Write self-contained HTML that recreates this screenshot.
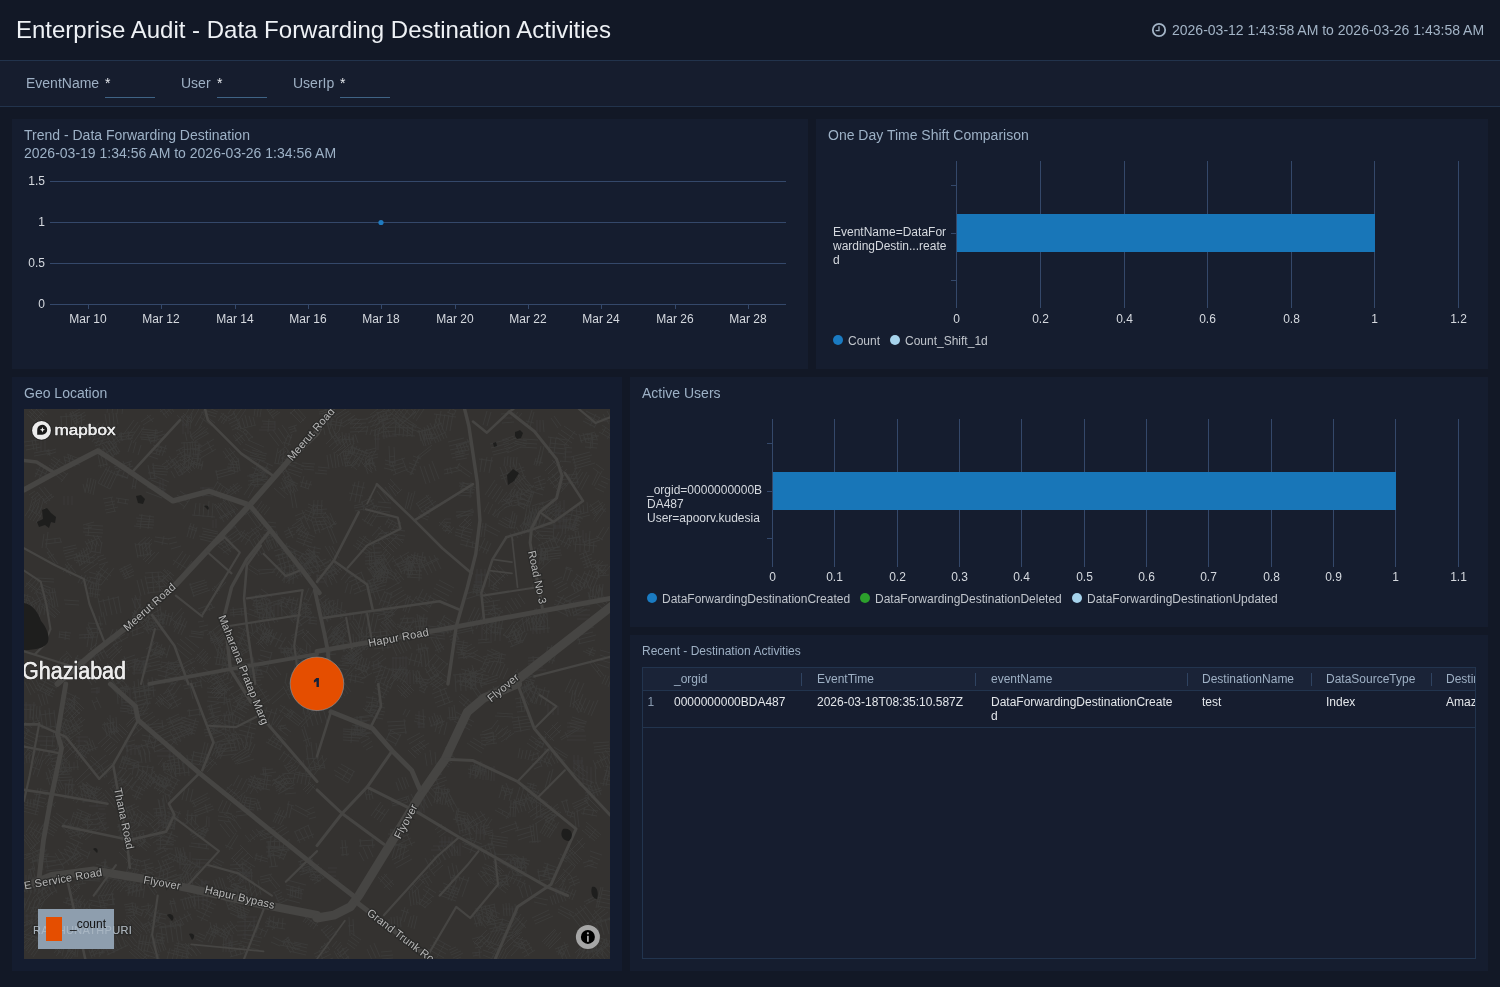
<!DOCTYPE html>
<html><head><meta charset="utf-8">
<style>
*{box-sizing:border-box;margin:0;padding:0}
html,body{width:1500px;height:987px;overflow:hidden;background:#121826;font-family:"Liberation Sans",sans-serif}
.abs{position:absolute}
.t{position:absolute;white-space:pre;line-height:1}
#hdr{position:absolute;left:0;top:0;width:1500px;height:60px;background:#121826}
#bar{position:absolute;left:0;top:60px;width:1500px;height:47px;background:#161d2e;border-top:1px solid #22334c;border-bottom:1px solid #22334c}
.panel{position:absolute;background:#151d2f}
.ptitle{color:#9db1c6;font-size:14px}
.lbl{color:#d5d9df;font-size:12px}
</style></head><body>
<div id="root" style="position:absolute;left:0;top:0;width:1500px;height:987px;will-change:transform;background:#121826">
<div id="hdr">
  <div class="t" style="left:16px;top:18px;font-size:24px;color:#eef1f5">Enterprise Audit - Data Forwarding Destination Activities</div>
  <svg class="abs" style="left:1151px;top:22px" width="16" height="16" viewBox="0 0 16 16"><circle cx="8" cy="8" r="6.2" fill="none" stroke="#a3b4c6" stroke-width="1.8"/><path d="M8 4.2V8.6H4.6" fill="none" stroke="#a3b4c6" stroke-width="1.3"/></svg>
  <div class="t" style="left:1172px;top:23px;font-size:14px;color:#a3b4c6">2026-03-12 1:43:58 AM to 2026-03-26 1:43:58 AM</div>
</div>
<div id="bar">
  <div class="t" style="left:26px;top:15px;font-size:14px;color:#9eb0c4">EventName</div>
  <div class="t" style="left:105px;top:15px;font-size:14px;color:#e6e9ee">*</div>
  <div class="abs" style="left:105px;top:36px;width:50px;height:1px;background:#3f6385"></div>
  <div class="t" style="left:181px;top:15px;font-size:14px;color:#9eb0c4">User</div>
  <div class="t" style="left:217px;top:15px;font-size:14px;color:#e6e9ee">*</div>
  <div class="abs" style="left:217px;top:36px;width:50px;height:1px;background:#3f6385"></div>
  <div class="t" style="left:293px;top:15px;font-size:14px;color:#9eb0c4">UserIp</div>
  <div class="t" style="left:340px;top:15px;font-size:14px;color:#e6e9ee">*</div>
  <div class="abs" style="left:340px;top:36px;width:50px;height:1px;background:#3f6385"></div>
</div>

<!-- Panel 1: Trend -->
<div class="panel" style="left:12px;top:119px;width:796px;height:250px">
  <div class="t ptitle" style="left:12px;top:9px">Trend - Data Forwarding Destination</div>
  <div class="t ptitle" style="left:12px;top:27px">2026-03-19 1:34:56 AM to 2026-03-26 1:34:56 AM</div>
</div>

<!-- Panel 2: Time shift -->
<div class="panel" style="left:816px;top:119px;width:672px;height:250px">
  <div class="t ptitle" style="left:12px;top:9px">One Day Time Shift Comparison</div>
</div>
<!-- Panel 3: Geo -->
<div class="panel" id="geo" style="left:12px;top:377px;width:610px;height:594px;background:#141c2f">
  <div class="t ptitle" style="left:12px;top:9px">Geo Location</div>
</div>
<!-- MAP START -->
<div class="abs" style="left:24px;top:409px;width:586px;height:550px;overflow:hidden;background:#343230">
<svg width="586" height="550" viewBox="0 0 586 550" style="position:absolute;left:0;top:0">
<rect width="586" height="550" fill="#343230"/>
<path d="M269 274L280 281M268 276L279 283M264 277L277 285M277 276L271 284M274 276L270 282M497 38L483 44M495 35L482 41M493 32L480 38M492 29L479 34M490 27L478 31M178 119L194 123M179 122L194 125M178 125L193 128M175 127L193 131M176 130L192 134M270 533L284 536M270 536L283 539M268 539L283 543M265 542L282 546M150 56L142 61M149 52L140 59M145 51L138 56M148 59L142 51M152 58L145 47M591 12L577 12M592 9L577 10M449 178L458 179M448 180L457 182M449 183L457 184M454 177L453 185M451 175L449 185M514 326L522 329M514 329L521 332M511 332L520 335M511 335L519 338M522 327L518 339M578 62L570 77M574 63L568 76M37 223L47 224M35 225L46 227M35 228L46 230M42 222L41 231M36 222L35 229M16 502L7 503M14 498L6 499M537 403L522 414M535 402L521 412M535 398L519 410M534 395L517 408M217 311L233 316M217 316L232 320M215 321L231 325M214 325L230 329M227 312L223 329M300 280L308 282M298 283L307 286M304 278L302 287M93 338L85 346M91 335L82 343M88 333L80 341M86 329L77 338M84 326L74 335M518 202L524 212M517 207L521 214M514 209L518 215M509 208L516 217M507 210L513 219M270 141L274 157M266 141L270 158M262 143L266 159M258 146L262 160M254 145L258 161M273 142L252 147M420 315L414 319M419 311L412 316M416 309L410 314M462 532L476 537M462 537L475 541M459 541L473 546M459 546L471 551M437 285L451 297M435 287L449 300M435 292L447 302M445 290L439 297M450 295L445 302M10 293L9 311M6 295L6 311M2 293L2 311M-1 292L-2 311M12 296L-4 296M10 301L-2 300M12 271L17 281M7 270L14 282M5 274L11 284M1 273L7 286M454 241L440 249M451 238L438 245M448 235L436 242M443 250L436 239M364 163L362 174M361 162L359 173M358 161L356 173M355 163L353 173M352 159L350 172M366 169L348 167M367 164L349 162M240 125L248 140M236 126L245 142M233 129L241 144M229 130L238 146M225 130L235 147M20 78L29 89M15 78L26 92M13 83L23 95M28 85L19 92M30 87L20 94M20 341L15 356M16 341L11 355M13 339L7 354M530 338L544 347M528 340L543 349M529 345L541 352M79 38L83 57M75 38L80 58M73 41L77 59M84 55L74 57M82 40L70 42M401 98L408 100M400 100L407 103M397 102L406 105M395 105L405 108M394 107L404 111M48 48L51 58M44 46L47 59M40 47L43 60M245 198L232 201M248 194L231 198M234 204L232 195M239 203L237 193M118 319L109 327M116 315L106 324M115 322L112 318M313 199L322 204M311 201L320 206M312 204L319 209M322 201L316 210M291 109L296 124M288 112L292 125M296 120L290 122M383 -5L391 4M378 -3L387 7M375 1L384 11M371 4L380 14M369 9L376 17M392 2L374 18M392 3L375 17M293 146L301 158M290 149L297 160M285 150L294 162M283 153L290 165M280 157L287 167M402 19L407 35M400 22L405 36M397 22L402 37M394 21L400 37M144 385L147 393M141 385L143 394M398 245L394 258M393 245L390 257M388 244L385 256M398 254L384 250M449 106L432 107M450 102L432 103M361 51L371 54M361 55L370 57M360 59L369 61M210 277L194 284M209 272L192 280M205 269L190 275M204 264L188 271M202 261L187 267M198 306L186 309M197 302L185 305M197 298L184 301M195 294L183 298M190 309L187 295M189 309L185 296M410 146L417 160M405 147L412 162M401 149L408 164M396 150L404 166M415 150L397 159M414 149L397 157M529 127L534 139M525 128L530 141M522 131L527 142M518 133L523 144M515 135L520 145M531 129L514 137M536 137L517 145M168 4L166 20M164 6L162 19M168 13L162 12M168 9L162 8M69 172L65 180M67 169L62 178M64 168L60 177M62 166L57 175M58 166L54 174M70 175L55 167M55 337L40 352M52 334L37 349M49 330L34 345M46 327L30 342M49 343L40 333M53 340L43 330M536 497L550 504M534 500L548 507M534 503L546 510M271 396L286 404M267 399L284 408M507 268L492 270M506 264L492 266M472 207L471 217M468 208L467 217M474 211L465 211M255 425L236 431M251 422L235 427M251 418L234 423M340 100L331 102M341 97L330 99M338 95L330 97M340 102L338 92M21 99L12 114M18 98L9 112M15 97L6 111M14 93L4 109M10 93L1 107M17 108L5 100M581 357L591 360M580 361L590 364M581 366L589 368M579 370L588 372M576 374L587 376M584 356L579 377M586 357L582 377M125 328L131 343M121 331L126 345M117 335L122 346M112 336L117 348M129 333L111 340M192 450L200 454M189 452L198 457M189 455L197 459M265 422L248 433M263 418L246 429M260 416L244 426M256 431L249 420M430 336L423 342M429 333L421 339M428 338L426 335M534 297L534 306M529 296L529 306M524 295L524 306M342 17L334 24M338 15L331 21M337 10L329 18M333 9L326 15M331 6L324 12M268 396L265 409M265 392L262 408M270 397L263 395M103 297L114 299M103 301L114 302M104 304L113 305M112 296L111 307M108 298L107 305M21 283L24 295M18 285L21 296M14 285L18 297M428 428L428 438M425 428L425 438M421 427L421 438M418 428L418 438M431 433L415 433M183 279L204 281M183 283L203 285M184 288L203 289M183 292L203 294M201 278L200 296M156 468L137 476M153 465L136 472M152 461L134 468M150 457L132 464M148 453L131 460M212 289L227 297M213 294L225 301M208 296L223 304M209 301L221 308M205 303L219 311M216 292L209 305M186 181L169 187M184 179L168 184M183 176L167 181M183 173L166 179M181 171L165 176M170 188L166 174M567 250L580 267M566 254L577 268M575 261L573 263M570 155L560 159M572 151L559 156M568 149L558 153M568 145L556 150M565 142L555 146M564 159L559 144M568 159L561 141M55 533L53 548M52 533L51 548M57 535L50 534M167 408L175 418M161 409L172 421M159 413L168 424M175 417L167 424M169 408L160 416M313 525L305 531M312 522L303 529M310 519L301 527M308 517L299 524M304 516L297 522M307 532L297 520M357 153L350 153M357 148L350 149M356 144L349 144M357 139L349 139M357 134L348 135M352 156L349 133M24 59L19 71M21 56L15 70M18 54L11 68M22 69L11 64M24 66L12 60M380 272L390 282M378 274L388 284M377 277L386 286M373 276L384 288M374 281L382 289M387 276L377 287M82 419L75 419M83 414L75 414M82 409L75 410M82 405L75 405M81 400L74 400M365 162L354 168M363 158L352 163M364 163L362 158M355 169L351 162M529 507L511 515M526 505L510 512M525 501L508 509M468 433L472 448M464 434L469 449M461 437L465 450M457 437L462 451M469 434L457 438M471 438L457 443M159 4L168 13M157 7L165 15M153 6L163 17M161 5L156 10M284 95L294 99M284 98L292 102M281 101L291 105M281 105L290 109M278 107L288 112M293 97L287 112M290 95L283 112M266 70L270 77M264 72L267 79M261 73L264 80M257 73L261 82M269 75L260 80M271 73L257 80M41 462L45 471M39 466L43 473M36 466L40 474M33 467L37 475M296 510L289 520M292 510L286 518M291 507L284 516M288 506L281 514M286 503L279 513M294 517L280 507M158 469L142 473M159 465L141 470M228 460L216 474M227 457L214 472M219 472L216 469M222 470L216 465M18 381L24 382M17 384L23 386M14 388L22 390M13 392L21 394M10 395L20 398M17 380L13 396M301 173L292 173M301 169L292 170M302 166L292 167M302 175L302 163M294 175L293 165M165 60L155 67M163 57L153 64M158 55L150 60M157 50L148 57M154 47L146 53M161 64L150 49M159 66L148 50M303 349L290 366M299 347L286 363M295 344L283 360M297 358L289 352M461 262L445 270M461 259L443 267M450 269L448 263M450 268L448 264M499 447L502 462M494 448L498 463M489 448L494 464M486 450L489 465M464 501L472 510M463 505L470 512M461 507L467 514M456 507L464 517M454 509L462 519M75 175L73 189M73 173L71 189M70 174L68 188M67 175L66 188M76 186L64 184M77 181L64 179M92 102L82 104M94 98L81 101M91 95L81 97M91 92L80 94M89 88L79 90M91 103L87 88M281 195L288 196M279 199L287 200M279 203L287 204M276 207L286 208M283 193L281 209M479 209L476 226M476 209L473 226M473 208L470 225M469 209L467 225M477 224L467 223M480 220L465 217M401 147L400 154M399 143L397 154M396 147L395 153M394 144L392 153M391 143L390 152M402 149L389 146M402 152L389 149M289 462L276 466M289 458L275 463M287 464L285 458M585 339L589 345M581 341L586 347M578 343L582 350M575 346L579 352M63 75L65 82M59 75L61 83M20 89L15 105M16 90L12 104M12 89L8 103M9 87L5 102M485 42L469 46M487 38L468 43M485 34L467 39M485 30L466 35M510 343L508 352M507 341L504 351M503 341L501 350M499 341L497 350M496 339L494 349M303 11L306 25M298 11L301 26M306 14L297 16M437 548L430 551M439 544L429 549M437 542L427 546M434 540L426 544M432 538L425 541M309 549L294 555M307 545L293 552M305 542L291 548M305 538L290 545M300 553L295 541M510 426L494 431M509 422L493 427M510 417L491 422M495 54L501 70M489 53L496 71M486 57L492 73M481 57L487 75M476 58L483 76M501 61L477 70M500 58L476 67M550 354L564 364M549 358L561 367M546 361L559 371M556 356L549 365M249 443L252 458M246 445L248 458M250 446L246 446M254 457L245 458M53 351L54 361M50 353L50 361M45 352L46 362M42 353L42 362M37 352L38 362M55 358L37 359M78 488L81 498M74 486L77 499M467 3L463 17M463 2L459 16M45 250L40 261M42 249L36 259M37 249L33 257M14 529L0 540M12 525L-3 536M8 522L-5 533M8 517L-8 529M5 513L-11 526M73 228L55 229M71 225L55 226M61 230L61 225M67 230L67 224M109 57L92 63M107 55L91 60M108 52L90 58M103 62L99 52M106 58L105 53M474 399L487 406M471 401L485 409M486 403L482 410M479 402L478 405M55 147L42 151M53 145L41 148M50 142L40 145M53 139L39 142M52 136L39 139M280 193L282 201M277 194L279 202M399 380L408 397M395 381L404 399M392 385L400 401M387 385L396 403M384 388L392 405M211 322L220 334M208 324L217 336M212 323L209 325M246 466L256 478M244 469L253 480M37 344L21 347M34 340L20 343M25 346L24 342M26 347L25 341M584 503L573 511M581 500L571 508M578 498L569 506M578 511L570 501M498 523L483 532M496 520L482 529M543 108L541 125M540 107L538 125M545 111L537 110M422 272L409 281M418 271L408 278M418 268L406 276M415 266L405 274M414 264L403 272M403 238L405 257M400 241L402 258M396 240L398 258M157 137L147 140M153 133L145 135M152 128L144 130M115 336L115 346M111 337L111 346M107 337L107 346M103 334L103 346M117 337L101 337M462 114L460 128M459 114L457 128M463 118L456 118M566 396L552 403M564 393L550 400M566 390L549 398M564 388L548 395M565 397L561 388M283 140L293 152M281 142L291 153M279 144L289 155M277 146L286 157M275 148L284 159M292 147L280 157M291 147L280 156M410 190L406 198M407 186L402 196M403 184L398 194M399 180L393 192M407 197L394 191M408 194L395 188M74 544L67 547M72 541L66 544M68 549L65 541M71 548L68 540M263 371L255 383M260 369L252 380M256 366L248 377M260 378L250 371M262 379L249 370M90 159L77 176M84 159L73 173M81 155L70 170M84 171L72 162M87 167L75 158M107 428L97 431M103 425L95 427M101 420L94 422M103 415L93 418M99 432L94 415M100 432L95 415M128 209L134 220M127 212L131 221M124 212L129 222M122 214L127 223M120 216L125 225M133 216L122 222M133 213L119 220M138 504L130 515M135 501L127 513M131 499L124 511M129 496L120 509M135 512L121 503M136 510L122 501M44 414L53 421M40 415L51 424M37 417L49 427M49 414L41 424M124 500L117 501M127 496L117 498M125 502L124 494M261 195L274 210M257 199L270 214M189 94L188 109M185 92L184 108M180 95L179 108M176 94L175 107M172 94L170 107M191 108L168 106M384 60L369 66M382 57L367 62M379 54L366 58M381 49L365 54M372 65L368 53M383 62L378 49M130 9L119 16M127 6L117 13M129 13L123 6M143 399L157 405M143 403L155 409M139 405L154 412M139 409L152 415M136 411L151 418M156 402L148 420M150 402L144 416M586 157L578 167M582 157L576 165M579 156L573 163M579 152L571 161M576 151L569 159M580 165L571 157M582 165L570 155M288 460L298 462M288 462L298 464M286 465L297 467M287 468L297 469M286 470L297 472M149 489L153 503M146 491L149 504M152 494L145 495M151 492L146 493M98 439L112 453M95 443L108 456M112 450L106 457M109 446L102 454M48 371L29 372M48 368L29 369M46 365L28 366M48 362L28 363M34 372L33 362M31 372L31 362M283 208L293 209M285 211L293 212M284 214L293 215M286 207L286 215M115 358L104 360M117 353L103 355M111 359L110 353M115 358L114 353M119 541L136 546M120 545L135 550M549 192L553 205M546 193L550 206M543 195L547 207M540 197L544 208M470 495L473 509M465 496L469 510M461 496L464 511M457 497L460 512M453 500L456 513M471 495L451 500M471 498L453 502M589 342L570 344M585 339L570 341M585 336L570 338M585 333L569 334M566 106L551 110M564 103L550 107M149 448L138 453M147 444L137 449M146 451L143 445M387 187L371 196M382 185L369 193M380 181L367 189M378 178L365 185M376 173L362 181M218 228L226 242M215 233L223 244M210 233L219 247M206 236L215 249M202 239L211 252M227 240L209 251M227 237L206 251M324 540L319 546M320 539L316 544M318 536L313 542M317 533L311 540M313 532L308 538M432 232L444 234M432 235L444 237M433 238L443 239M433 240L443 242M432 243L442 245M440 231L437 246M325 540L315 548M323 538L313 545M317 548L313 544M473 272L456 277M474 269L456 275M474 266L455 272M458 279L455 270M208 407L217 420M204 410L213 423M200 413L210 425M196 415L206 428M323 218L312 226M324 213L310 224M321 211L308 221M511 113L504 124M506 113L500 121M504 107L496 118M508 119L499 113M508 120L499 113M361 180L346 184M362 176L345 181M362 173L344 178M360 171L344 175M360 168L343 172M348 184L345 171M506 117L519 128M503 120L516 132M515 123L510 128M507 118L504 122M499 30L514 31M499 34L513 35M496 38L513 39M276 152L281 162M272 155L277 165M267 156L272 167M279 154L267 159M75 460L74 471M71 460L70 471M66 460L66 471M62 459L62 471M58 459L58 471M76 472L56 471M77 470L55 469M389 15L388 28M384 16L383 28M380 16L379 28M376 15L375 27M372 13L371 27M391 27L368 25M389 19L371 18M185 475L177 475M186 473L177 473M182 478L182 471M178 478L178 470M352 301L347 307M349 297L344 304M346 294L341 302M350 308L339 299M368 9L354 13M369 5L353 9M367 1L352 4M577 101L570 107M577 97L568 104M574 97L566 102M526 405L533 407M522 408L531 412M531 406L529 412M529 405L527 411M576 131L560 136M574 129L559 133M561 137L559 130M566 136L565 129M220 388L232 390M220 391L232 393M218 393L231 396M217 396L231 399M216 399L230 401M227 389L225 401M540 91L540 108M536 92L536 108M532 90L532 108M79 203L82 216M75 207L77 217M70 204L73 218M150 355L143 363M145 355L140 361M142 352L137 358M139 349L134 356M271 237L271 245M268 235L267 245M264 238L264 245M261 238L260 245M257 236L257 244M271 244L257 243M274 240L254 239M459 459L470 473M458 463L467 475M454 464L464 477M463 464L457 468M468 469L461 474M445 468L438 488M440 467L433 486M435 464L428 485M430 466L424 483M445 472L428 466M462 357L460 367M460 355L457 366M457 354L454 366M454 356L451 365M451 354L448 364M463 363L448 359M462 361L449 358M365 400L356 413M361 400L353 411M359 396L350 409M357 393L347 407M361 406L351 400M287 365L284 377M283 364L281 376M279 364L277 375M276 362L273 374M271 364L269 374M287 366L271 363M287 368L270 365M561 25L575 27M559 29L574 31M561 33L574 35M561 38L573 39M568 24L566 40M569 26L568 39M494 79L510 84M492 83L508 88M492 88L507 93M490 93L505 97M508 81L503 98M510 82L505 99M273 -1L282 9M270 1L280 12M266 3L277 14M282 8L276 14M274 -3L266 5M367 238L350 240M363 234L349 236M363 230L349 232M365 226L348 228M364 222L347 224M359 242L356 220M364 240L362 220M423 -3L432 2M423 3L430 6M427 -1L424 4M432 1L430 6M166 22L168 30M161 23L163 32M491 495L492 507M488 497L489 507M485 494L486 507M482 494L483 507M479 495L480 507M492 500L479 500M144 460L143 471M140 460L139 470M137 457L135 469M202 228L194 237M200 226L191 235M199 235L193 230M221 205L206 206M221 202L206 204M223 199L206 201M210 208L209 198M218 207L217 199M78 133L76 144M73 132L71 143M69 132L67 142M77 144L65 142M447 263L465 267M446 267L464 271M447 272L463 275M459 265L457 274M467 176L475 180M466 179L474 182M470 178L469 181M218 534L199 538M214 532L198 536M208 538L206 531M206 537L205 533M170 36L178 37M168 40L178 42M168 45L177 46M167 49L177 50M175 34L173 52M176 35L174 52M72 71L69 86M70 70L66 85M67 69L64 84M64 69L61 84M301 104L312 116M298 107L309 119M302 103L297 109M312 112L305 119M478 510L486 513M477 514L484 517M472 518L482 522M479 510L475 519M501 302L493 303M502 297L492 298M502 293L492 294M501 288L491 290M501 302L499 288M498 303L496 288M27 44L10 47M26 41L10 44M35 370L40 380M34 373L38 381M30 373L36 383M28 374L34 384M110 204L126 209M108 207L125 212M111 201L108 210M62 474L52 476M63 470L51 473M62 467L51 470M59 465L50 467M61 461L49 464M59 475L57 462M55 478L51 460M250 224L247 234M248 221L244 234M246 220L242 233M243 220L239 232M241 218L236 231M250 228L238 224M60 341L53 348M57 340L51 346M57 336L49 344M56 345L52 341M104 228L89 236M101 225L88 233M94 236L90 229M98 233L94 227M486 469L476 479M483 467L473 476M481 474L478 471M479 476L476 473M292 408L285 410M291 403L283 406M290 398L281 402M346 378L349 390M344 378L346 391M341 382L343 391M348 385L342 386M298 91L297 107M294 91L293 107M290 91L289 107M299 97L289 96M299 102L288 102M179 5L191 14M176 8L188 17M536 149L517 151M538 146L517 149M537 144L516 146M537 141L516 143M536 138L516 140M524 152L523 139M517 152L516 140M491 449L506 452M488 451L505 455M499 451L498 453M402 465L408 474M397 464L405 477M406 467L398 471M404 463L396 469M490 324L477 333M487 321L474 330M484 317L472 326M329 26L330 33M325 24L326 33M322 24L322 33M318 23L319 34M315 24L315 34M330 30L315 31M187 264L195 270M187 268L193 273M186 272L191 276M190 263L183 273M343 180L330 185M343 175L329 181M340 171L327 177M337 168L325 173M338 163L324 169M337 183L330 166M344 180L337 163M183 486L183 499M179 486L179 500M174 484L175 500M170 484L171 500M186 487L167 488M184 491L169 491M210 137L199 144M209 133L197 140M207 129L195 136M207 143L199 130M152 534L166 537M150 536L166 540M150 539L165 543M147 541L164 545M165 534L162 548M155 532L152 545M64 392L83 392M65 397L83 397M73 391L73 398M163 346L165 367M159 348L161 367M154 346L156 367M150 348L152 368M166 363L150 365M503 374L513 377M498 376L512 380M498 379L511 383M507 374L505 383M510 374L507 385M167 50L158 55M167 47L156 52M163 45L155 49M161 42L153 46M160 38L152 42M162 53L155 41M143 376L135 385M139 375L133 382M136 372L130 380M140 379L134 374M524 28L543 31M526 34L543 36M522 38L542 40M524 43L542 45M532 29L530 44M527 28L525 44M53 400L67 406M52 403L66 408M50 405L65 411M48 407L64 413M67 405L63 414M65 405L61 413M128 534L136 551M126 536L134 552M137 550L133 553M135 546L131 548M549 106L559 110M551 110L557 113M549 113L556 116M548 117L555 120M546 120L553 123M553 107L547 121M555 108L549 122M26 476L13 485M23 473L11 481M19 470L8 477M20 481L14 472M267 230L279 244M264 232L276 247M262 237L273 250M258 239L269 252M281 109L286 120M276 109L282 122M400 387L400 404M397 388L397 404M402 391L395 391M166 456L160 469M164 456L157 468M165 465L158 461M167 456L163 455M115 106L130 108M112 109L130 111M113 112L130 113M112 115L130 116M110 117L129 119M126 106L124 120M118 105L116 120M113 400L124 409M111 405L121 413M106 408L118 417M123 406L114 417M339 127L351 136M335 128L350 138M333 131L348 141M332 134L346 143M329 136L344 146M342 127L333 141M347 131L339 143M64 336L52 337M63 332L52 332M64 328L52 328M55 337L55 328M350 155L355 163M347 155L353 164M346 158L351 166M343 158L349 167M351 157L345 161M352 156L344 161M106 348L101 361M104 346L98 360M100 347L95 359M102 360L95 358M106 352L98 349M448 113L439 122M447 110L437 119M445 107L435 117M447 117L440 110M263 403L256 416M260 401L254 415M257 401L251 414M256 398L249 413M262 409L250 404M357 157L373 165M354 159L371 168M356 163L370 171M372 165L370 170M269 79L273 99M266 80L269 99M473 334L457 336M472 330L457 332M473 327L457 329M470 324L456 326M470 335L469 323M146 236L142 249M141 238L138 247M138 235L134 246M134 233L130 245M130 232L126 243M144 246L127 240M264 380L254 385M261 377L252 382M262 373L251 378M259 371L249 375M257 368L248 372M164 8L164 25M159 6L159 25M165 16L158 16M62 499L74 507M62 503L72 510M60 505L70 512M58 508L68 515M55 509L66 518M63 499L55 510M67 499L56 514M519 11L520 23M516 11L516 23M513 11L513 23M48 288L60 300M45 289L58 302M43 292L55 305M42 295L53 307M38 296L50 309M141 423L154 428M141 427L152 432M138 430L150 436M148 422L142 435M148 423L143 435M244 70L227 74M244 67L226 72M240 65L226 69M240 63L225 66M230 74L228 65M18 175L10 185M16 171L7 183M13 170L4 180M10 167L1 178M14 183L2 174M14 181L4 173M62 116L79 117M59 119L79 121M59 123L79 124M61 126L78 128M65 116L64 127M460 415L460 431M457 415L456 431M453 414L452 431M463 422L450 422M461 424L451 424M348 264L336 271M345 259L334 266M343 255L331 262M342 269L335 258M344 266L339 257M211 497L204 500M211 494L203 497M210 491L202 493M212 500L209 488M205 501L202 492M347 219L347 230M343 218L342 230M338 218L337 229M347 228L337 227M51 543L42 557M50 539L39 556M47 539L37 554M51 546L43 541M51 544L44 540M219 263L230 277M216 265L227 279M214 268L224 281M226 268L217 275M229 272L219 279M179 305L164 307M178 300L163 302M166 308L165 300M176 307L175 299M281 253L279 262M278 252L276 262M275 251L273 261M273 250L270 260M107 396L111 407M104 397L108 408M101 396L105 409M98 399L102 410M108 397L98 401M551 108L551 119M546 108L546 119M541 110L541 119M536 109L536 119M531 109L531 120M552 119L530 119M552 117L530 117M-3 392L16 397M-3 395L15 400M-6 397L15 403M-5 401L14 406M14 394L11 406M202 173L191 185M199 170L188 182M194 185L188 179M196 182L190 177M229 124L221 136M224 123L217 133M221 121L214 131M227 129L218 123M226 132L215 125M313 204L302 211M312 200L300 207M303 211L301 207M304 213L299 205M263 366L268 373M259 366L265 375M257 369L263 377M254 372L260 379M251 374L257 381M221 383L211 391M216 382L209 388M216 390L210 383M68 493L58 508M64 492L55 506M61 490L52 504M59 486L49 502M55 486L46 501M63 506L46 495M202 282L193 291M199 281L191 289M198 278L190 287M197 276L188 285M196 274L186 284M199 287L189 277M203 284L192 273M464 426L484 429M465 429L484 432M467 432L483 435M464 435L483 438M469 424L467 437M563 93L564 104M559 96L560 105M555 94L557 105M552 98L553 106M156 512L158 532M151 512L154 532M146 512L149 533M141 515L144 534M137 517L139 534M158 515L135 518M159 516L135 519M74 20L60 28M73 17L58 25M70 15L57 22M238 265L220 269M237 261L219 264M238 266L236 260M343 40L334 58M339 41L331 56M336 39L328 55M333 37L324 53M330 34L321 51M343 45L327 37M340 51L324 43M512 414L514 434M509 415L511 434M506 416L509 434M517 432L505 433M86 471L79 472M85 467L79 467M86 462L78 463M84 457L78 458M83 453L77 454M83 473L80 452M84 474L81 450M264 41L261 56M260 40L258 55M257 41L254 55M254 39L251 54M262 56L250 54M560 274L554 288M555 273L550 286M552 270L545 284M547 270L541 283M149 203L145 217M145 204L142 216M142 201L139 215M138 203L135 215M148 208L137 205M561 539L556 552M558 536L552 551M561 542L555 540M561 539L557 537M233 390L237 401M232 394L234 402M236 393L230 395M237 399L233 400M329 510L330 527M325 508L326 527M330 516L324 517M330 522L325 522M280 317L286 337M278 320L284 338M287 329L279 332M111 339L102 342M111 335L101 338M111 331L100 334M104 343L101 332M104 343L101 331M131 128L145 130M130 132L144 135M140 127L138 136M5 207L9 212M1 207L6 214M-2 210L3 217M11 210L-0 217M9 210L1 216M203 403L213 409M200 405L211 412M226 367L241 373M225 370L240 375M224 372L239 378M223 375L238 381M237 370L233 380M231 366L226 379M540 533L546 548M537 537L543 550M534 538L539 551M544 535L531 540M545 537L532 543M164 48L173 57M161 49L171 60M158 51L168 62M156 54L166 64M166 49L158 57M170 54L162 61M58 402L52 421M54 404L48 420M50 403L45 419M56 420L43 416M54 422L43 418M24 123L22 139M20 125L18 139M328 316L346 320M329 320L345 324M326 324L345 328M332 315L329 327M333 315L331 327M8 457L12 472M6 460L9 473M11 459L4 461M11 459L4 461M316 44L319 57M313 45L315 58M310 43L312 59M306 45L309 59M303 46L305 60M210 263L206 272M206 261L203 270M203 258L199 269M421 110L427 110M420 113L427 114M419 117L427 118M419 121L426 122M401 477L412 484M399 480L410 488M399 486L407 492M396 490L405 495M393 493L402 499M406 479L395 496M362 3L364 11M359 4L361 12M356 5L359 12M353 3L356 13M364 9L354 11M364 10L356 13M233 55L245 62M232 57L243 65M228 58L242 67M244 58L238 68M242 58L236 66M24 513L12 524M21 512L10 522M17 512L8 520M18 508L6 518M15 507L5 516M16 523L6 512M260 446L243 447M261 441L242 443M260 437L242 438M259 432L242 433M246 448L245 432M245 449L244 432M165 543L161 555M159 544L157 553M155 541L152 552M151 540L148 551M146 539L143 550M165 549L143 543M577 67L586 71M577 72L584 75M574 75L582 79M571 79L580 83M76 238L68 246M73 234L65 242M72 245L66 239M348 324L337 325M348 319L337 321M348 315L336 316M346 311L336 312M349 306L335 308M339 325L337 307M267 43L258 49M262 42L256 47M261 38L254 44M267 46L260 36M306 117L313 134M303 118L310 135M65 494L66 504M60 494L62 505M56 493L58 505M52 495L54 506M68 504L51 505M42 283L56 290M37 286L54 295M37 291L51 299M52 286L45 298M366 209L372 216M363 209L370 218M360 209L367 219M358 212L365 221M368 211L361 216M367 207L357 214M42 291L51 291M41 295L51 295M39 299L51 299M51 289L50 301M551 458L538 473M548 455L534 470M541 470L537 466M547 467L539 460M43 45L58 51M41 48L57 53M40 51L56 56M47 46L45 53M55 48L52 56M496 80L484 95M492 80L482 94M491 77L480 92M486 95L479 90M486 96L479 90M298 346L301 360M293 347L296 361M289 349L292 362M283 347L287 363M279 351L282 364M301 358L282 362M300 356L281 360M562 169L565 179M560 173L561 180M556 174L558 181M552 175L554 182M548 173L551 183M207 255L203 265M204 255L200 263M201 253L197 262M208 257L199 254M206 262L197 259M158 257L145 258M157 253L145 254M147 258L147 253M363 268L352 271M360 265L351 268M359 261L349 264M358 257L348 261M357 254L347 257M510 106L505 124M508 104L503 123M505 106L500 123M502 105L498 122M506 270L510 279M504 272L507 280M502 273L505 281M500 275L503 282M497 275L500 283M510 274L497 280M509 274L497 279M236 365L248 367M233 369L247 372M233 374L247 376M232 378L246 381M242 364L239 381M244 366L242 380M110 201L123 214M108 203L120 217M353 272L367 279M352 276L365 283M351 279L363 286M349 283L361 289M364 277L358 289M297 293L303 313M293 296L298 314M288 297L294 316M283 297L289 317M279 299L284 318M213 16L224 23M211 18L223 26M224 23L222 26M215 17L213 21M368 184L363 199M364 183L359 197M361 182L355 196M366 194L356 191M368 186L360 183M272 384L261 385M270 379L260 380M270 374L260 375M272 369L259 370M270 364L258 365M263 319L255 320M262 316L254 318M257 322L256 316M492 262L502 270M491 265L500 272M489 267L497 275M494 260L487 269M94 63L86 80M91 62L83 79M88 61L80 77M86 57L77 76M83 58L74 74M86 80L74 74M93 66L81 60M270 156L269 175M266 155L265 175M261 155L260 174M270 169L260 169M16 490L14 503M11 491L9 502M6 492L4 501M1 489L-0 501M387 145L394 152M383 146L392 155M380 148L390 157M379 152L388 159M377 154L386 162M263 70L274 75M260 71L273 77M207 476L217 486M202 478L214 489M200 482L211 492M197 485L209 496M213 479L201 492M216 483L206 495M586 363L583 371M583 361L580 370M445 269L458 287M445 274L455 289M457 285L454 288M293 458L278 463M291 455L277 460M289 451L275 456M287 448L274 453M280 463L276 452M535 413L525 429M532 414L523 428M529 412L520 427M527 410L518 425M524 409L516 424M530 422L520 416M533 419L521 411M483 97L470 108M482 94L468 106M159 316L146 321M158 313L145 319M158 310L144 316M156 308L143 314M155 305L142 311M151 321L145 308M160 203L149 216M158 199L146 213M154 215L146 209M378 7L393 17M378 10L392 19M374 10L390 22M372 13L389 24M372 15L387 26M350 291L360 295M348 295L358 299M355 290L352 299M303 115L290 116M302 112L289 113M305 108L289 109M302 104L289 105M303 100L289 101M458 164L457 179M455 165L455 179M452 165L452 179M460 173L450 173M460 177L449 176M471 244L482 246M471 248L481 250M470 252L480 254M478 244L476 255M476 245L474 253M170 487L172 497M166 486L170 498M164 488L167 499M161 488L164 500M158 491L161 501M172 487L156 491M400 472L389 484M396 470L386 481M394 480L389 475M401 475L394 468M459 537L451 539M457 533L450 535M459 527L448 530M67 347L76 356M66 351L74 358M22 191L36 204M20 193L34 206M18 195L32 208M17 197L31 209M75 515L66 524M70 513L63 521M69 522L65 518M258 16L267 29M254 19L263 32M249 21L259 35M245 24L255 37M525 281L521 297M521 278L516 296M516 279L512 295M513 276L508 294M526 283L511 279M408 52L415 70M405 55L411 72M400 57L406 74M396 57L402 75M450 103L433 109M449 100L432 107M205 81L199 92M203 79L196 90M199 78L193 88M197 74L190 86M194 72L187 84M202 90L187 80M206 82L193 73M459 499L467 503M457 502L465 506M141 339L130 343M140 334L128 339M110 166L100 170M110 162L99 168M109 160L98 166M108 157L96 163M107 155L95 161M106 169L100 157M103 170L97 159M512 101L516 114M508 99L513 115M506 102L510 116M518 166L512 179M515 162L508 178M517 171L511 168M285 282L289 290M283 284L287 291M280 283L284 293M278 286L281 294M275 287L279 295M288 285L276 291M286 284L276 289M60 332L69 338M59 337L67 342M57 340L65 345M53 342L63 349M450 221L431 225M448 219L430 223M446 217L430 220M446 214L429 218M449 225L446 211M433 225L431 217M578 481L594 484M577 485L593 488M573 488L592 492M572 492L592 496M573 497L591 500M579 478L574 499M577 478L572 499M192 110L192 119M189 111L189 119M339 248L326 257M338 245L325 255M337 242L323 252M335 240L321 250M333 238L320 248M333 254L325 243M384 14L397 20M385 19L395 23M401 235L403 242M397 234L399 243M394 235L395 244M405 239L392 241M402 238L394 240M168 152L160 163M166 146L156 161M162 145L153 159M159 142L149 156M165 161L149 151M294 58L304 59M294 61L303 62M291 64L303 65M140 406L130 407M140 403L130 404M141 399L129 400M133 408L132 399M134 287L140 295M132 289L138 296M132 293L136 298M138 289L131 295M398 208L401 223M395 206L398 223M393 205L396 223M391 209L393 224M401 211L389 213M402 217L390 218M424 254L412 268M420 252L408 265M415 249L405 262M412 245L401 258M424 256L411 245M542 402L551 405M543 406L550 408M549 402L546 409M544 402L543 406M481 524L473 537M478 523L471 536M477 519L468 535M474 519L466 533M472 516L463 532M432 456L436 472M428 454L432 473M424 457L428 474M435 467L426 469M226 489L212 493M222 486L211 489M223 481L210 485M220 477L209 481M217 474L207 476M217 494L211 474M419 207L431 214M418 210L429 217M413 212L427 220M413 216L425 224M421 206L414 218M523 204L524 224M520 205L520 224M516 208L516 225M512 207L513 225M509 208L509 225M526 219L506 220M332 257L319 272M328 257L317 270M7 422L16 433M6 425L14 435M2 425L12 437M-0 426L10 439M-0 430L7 440M16 432L6 440M380 226L387 240M375 226L383 242M373 229L380 244M369 231L377 245M367 233L373 247M391 306L402 308M391 309L401 311M390 312L400 315M443 30L448 40M441 32L445 41M439 35L442 42M436 36L439 44M432 35L436 45M445 32L432 37M446 32L432 38M443 49L432 51M440 47L432 48M441 44L431 46M441 41L431 43M402 -3L392 12M398 -4L389 10M394 -4L386 8M140 160L153 176M139 166L150 179M135 169L146 182M129 169L142 185M146 164L132 176M509 488L524 491M510 493L523 496M78 238L84 249M74 239L80 250M72 242L77 252M68 244L73 254M64 244L70 256M81 242L66 250M291 303L277 318M288 302L275 316M287 310L282 306M-3 185L7 188M-2 190L6 192M-5 194L5 196M-5 198L4 200M-7 202L3 204M1 185L-4 203M4 185L-1 205M184 221L176 223M184 216L175 218M180 212L174 213M111 186L116 198M108 189L112 200M229 8L231 16M225 7L228 17M221 6L224 18M218 9L221 19M215 12L217 20M232 16L216 20M510 3L506 18M508 1L503 17M510 14L502 12M321 431L323 447M318 431L319 447M325 445L317 446M324 438L316 439M92 4L94 15M89 4L90 16M85 4L86 16M81 5L83 17M252 122L257 137M248 121L254 138M246 124L252 139M243 125L249 140M240 125L246 141M254 125L241 130M255 128L242 133M505 476L508 486M500 474L504 488M495 477L499 489M386 261L378 275M383 261L376 273M381 258L373 272M378 258L371 271M377 256L369 270M382 273L368 265M384 266L374 260M312 245L301 246M308 242L301 243M310 239L300 239M307 246L306 238M304 246L303 239M48 156L42 164M45 155L39 163M36 261L44 270M36 265L41 272M33 266L39 274M30 267L37 276M28 269L34 277M42 266L31 275M43 267L31 276M329 36L328 46M325 38L324 46M330 45L322 44M64 214L79 215M62 219L79 220M63 223L78 224M74 214L73 224M359 23L350 27M356 19L348 22M356 14L346 18M352 11L344 14M351 6L342 10M493 213L482 229M490 212L479 227M483 228L480 226M484 229L479 225M590 506L594 522M585 508L590 524M581 511L585 525M576 510L580 526M572 513L576 527M593 508L570 515M591 508L572 513M393 261L402 276M390 265L398 278M399 271L395 274M404 274L395 279M510 386L524 394M509 391L522 398M572 55L580 61M569 59L577 65M575 176L580 190M572 180L576 191M568 181L572 193M564 183L568 194M581 188L566 194M48 307L56 321M46 310L52 323M42 310L49 325M40 313L46 326M36 313L43 328M56 317L39 326M54 315L39 322M179 490L192 496M177 494L190 500M177 499L188 504M172 501L186 508M173 507L184 512M188 491L177 512M30 301L32 319M25 299L27 319M21 301L23 320M16 301L19 320M30 304L16 306M33 317L17 319M471 252L461 254M469 249L460 251M472 245L459 248M231 446L244 450M230 449L244 453M233 444L231 452M238 446L236 453M129 36L138 39M127 40L137 43M125 43L136 46M125 47L134 50M382 434L378 451M378 435L375 450M376 434L371 450M372 434L368 449M383 439L369 435M35 514L44 528M29 514L41 530M26 516L37 533M373 27L358 27M372 22L357 23M372 18L357 19M374 14L357 14M360 30L359 12M412 227L420 241M411 231L417 243M407 229L415 244M420 237L411 242M417 235L411 238M32 404L43 412M29 407L40 416M44 410L38 417M43 410L38 417M515 115L530 116M512 118L530 120M513 122L529 123M514 126L529 127M514 129L529 130M530 114L529 133M157 308L175 313M158 311L174 316M157 314L173 319M156 317L172 322M153 319L171 325M172 309L167 326M354 251L355 259M349 252L350 260M357 257L348 257M503 224L498 234M499 223L495 233M497 219L491 231M492 220L488 230M490 216L485 228M522 139L521 151M518 139L517 151M524 150L515 149M191 198L176 204M188 195L174 200M189 199L187 195M186 202L184 195M238 -6L236 8M235 -5L233 8M232 -6L230 7M239 -2L230 -3M178 419L184 422M174 420L183 424M174 423L182 427M174 426L181 429M180 419L176 428M184 419L178 431M161 534L171 544M157 535L168 547M164 536L160 539M169 263L160 272M165 260L157 269M163 256L153 266M158 254L150 263M168 268L154 255M163 273L149 260M15 468L18 477M12 467L15 478M9 468L13 478M6 468L10 479M18 472L7 475M77 356L83 368M74 356L81 369M80 360L77 362M83 364L78 367M326 240L333 247M322 241L332 250M322 245L330 252M320 247L328 254M332 245L325 253M333 244L324 254M476 208L460 210M474 204L459 206M477 199L458 202M474 196L458 198M476 191L457 194M472 210L469 191M147 325L157 333M146 330L154 336M142 333L151 339M141 337L148 343M153 329L144 340M490 13L478 14M488 9L477 9M491 4L477 5M25 361L29 375M22 363L26 376M29 368L22 370M204 8L199 15M202 6L197 14M200 4L194 12M206 10L197 4M203 12L196 7M95 25L99 32M91 27L96 34M88 28L93 36M86 32L91 38M98 29L88 36M98 25L85 35M127 525L123 543M123 526L120 543M120 526L117 542M117 525L114 541M127 534L114 532M126 536L114 534M438 73L452 79M436 75L451 81M438 79L450 84M440 73L437 80M449 76L446 83M206 512L213 522M203 514L210 525M199 516L207 527M197 519L204 529M213 516L199 526M209 515L198 522M166 43L164 61M161 44L160 61M167 59L158 58M167 47L160 46M1 313L8 319M-1 317L6 322M-3 320L3 325M-9 321L1 329M19 196L15 208M15 196L11 207M11 196L8 205M9 192L4 204M4 193L0 203M450 434L440 436M450 429L439 432M447 424L438 427M446 419L436 422M448 436L444 418M190 311L207 318M187 314L205 322M187 319L203 326M194 310L189 322M363 169L348 181M360 166L346 178M356 164L343 174M22 449L24 460M17 448L19 461M13 448L15 461M8 449L11 462M23 450L8 453M23 449L8 452M237 180L248 188M235 185L246 191M261 284L248 295M260 278L245 292M262 228L255 240M258 224L251 238M253 223L246 236M249 220L242 234M244 219L238 231M259 233L241 224M260 332L255 341M255 331L251 339M253 328L247 336M250 325L244 334M257 341L242 333M258 338L244 330M256 296L269 304M255 301L266 308M270 302L265 310M261 297L256 304M209 474L218 479M209 478L216 482M206 481L214 486M206 485L212 489M202 487L211 492M215 476L206 490M555 320L537 331M553 319L536 329M544 329L541 323M136 285L148 297M134 287L147 298M134 291L145 300M140 289L137 293M148 295L144 300M483 83L474 95M479 80L471 93M477 77L468 90M473 75L464 88M471 71L461 86M183 4L175 19M180 1L171 17M176 -2L167 14M171 -2L163 12M168 -5L159 10M125 342L126 353M120 340L122 354M116 341L118 354M306 104L311 116M303 107L308 118M299 110L304 119M295 111L300 121M313 114L297 121M540 38L548 39M540 43L548 43M539 48L548 48M536 52L547 53M542 38L541 53M343 325L331 325M342 321L331 321M342 317L331 317M343 312L331 313M345 308L330 309M337 327L336 307M334 327L333 307M373 11L360 21M373 8L358 18M363 21L359 15M372 13L370 10M170 536L177 545M167 538L173 547M92 308L93 324M89 309L90 324M86 306L87 324M95 322L84 323M93 320L86 320M426 386L434 401M424 390L430 403M131 369L126 378M127 367L122 376M123 365L118 374M120 361L114 371M116 360L111 369M132 371L114 360M175 465L163 478M173 462L161 476M170 461L158 474M169 458L156 472M395 262L396 275M392 262L393 275M389 261L390 275M386 263L386 275M383 261L383 275M261 59L265 68M257 59L262 70M265 67L261 69M263 61L258 64M64 341L57 353M62 339L55 351M60 337L53 350M57 338L51 349M466 500L476 505M462 503L475 509M460 507L473 512M459 511L471 516M469 500L463 515M470 501L464 514M331 25L334 34M328 28L330 35M324 27L327 36M320 26L324 37M318 29L321 38M468 233L454 234M465 230L454 231M376 508L377 518M373 507L374 518M370 508L371 518M367 508L368 519M365 510L365 519M563 200L549 207M560 198L548 204M468 410L462 419M465 408L459 417M130 278L113 283M129 276L112 281M88 313L91 325M86 316L88 326M83 313L86 327M80 314L83 327M91 313L78 316M553 400L555 418M550 403L552 418M274 189L271 201M270 188L267 199M266 187L262 198M274 196L262 192M273 192L265 190M250 257L257 266M246 259L253 268M243 263L249 271M319 235L311 239M315 232L309 236M313 229L307 232M314 224L305 229M315 238L308 226M202 336L196 350M199 335L193 349M196 334L191 348M194 332L188 347M281 268L278 278M276 266L274 277M271 268L269 276M267 268L265 275M263 264L261 274M206 231L215 243M204 235L211 245M201 237L208 247M197 239L204 250M193 240L201 252M273 121L291 128M274 125L289 131M273 129L288 134M272 132L287 138M285 123L279 137M574 291L567 307M570 292L564 306M566 291L560 304M562 289L556 303M559 285L553 301M113 67L111 80M110 69L108 80M112 78L108 77M259 308L252 318M256 306L249 316M129 503L143 506M125 506L142 510M127 511L141 515M136 504L134 514M377 113L371 123M372 114L368 121M369 111L364 119M365 109L361 116M375 119L362 112M376 116L364 110M504 385L509 399M500 385L506 401M497 387L502 402M494 389L498 403M490 390L495 404M508 388L489 394M520 205L516 217M518 202L513 216M515 201L510 215M513 200L507 214M523 205L510 200M521 204L512 201M270 164L262 174M264 163L258 172M261 161L255 169M258 157L252 167M254 156L248 164M268 168L252 156M25 445L13 446M23 441L12 442M437 131L453 135M436 135L452 139M444 131L442 138M449 132L448 139M62 138L66 154M59 139L64 154M57 141L61 155M55 143L58 156M52 144L56 157M65 145L53 148M542 75L532 83M540 70L529 79M537 67L526 75M534 63L523 72M535 83L524 68M539 80L528 65M261 136L279 145M259 139L278 148M257 141L276 151M263 134L258 145M279 144L275 151M76 420L59 421M76 415L58 416M74 410L58 411M64 423L63 408M423 380L430 395M421 382L428 396M417 380L425 398M428 390L422 393M426 382L418 386M409 437L424 437M407 441L424 441M415 437L415 441M77 537L79 545M74 537L76 546M81 543L74 544M80 542L75 544M493 106L490 120M491 104L487 120M489 102L485 119M492 114L485 112M490 119L485 118M273 155L255 160M272 150L254 156M268 146L253 151M268 142L251 147M266 137L250 142M147 354L152 368M143 355L149 370M365 77L372 87M361 78L369 89M356 79L365 92M353 82L362 94M41 537L32 547M38 535L30 544M41 539L37 536M37 544L32 539M384 393L368 397M383 390L368 395M385 387L367 393M384 393L382 388M141 426L129 434M139 423L126 430M135 420L124 426M529 341L524 355M526 340L520 354M522 339L517 352M527 355L514 350M530 343L520 340M230 366L239 380M227 368L237 382M224 369L234 384M388 450L372 459M386 446L370 455M385 441L368 451M493 48L492 59M490 48L489 58M487 48L486 58M484 47L483 57M481 48L480 57M-4 524L15 529M-6 527L14 532M503 511L491 526M500 508L488 524M497 505L485 521M494 503L481 519M280 223L268 229M280 220L267 227M280 224L278 221M176 79L189 79M177 83L189 83M176 86L189 87M179 78L179 88M311 160L298 166M307 157L296 162M305 153L294 158M302 150L292 154M520 98L510 101M520 93L508 97M205 39L215 52M201 39L212 54M199 42L209 56M211 42L201 49M211 48L206 52M218 78L205 87M216 76L203 85M214 74L202 83M212 85L206 77M215 83L209 75M240 203L230 204M242 200L230 201M241 197L230 198M239 194L229 195M237 191L229 192M234 206L232 190M232 420L237 426M228 421L234 428M226 425L231 431M221 426L227 433M237 423L224 433M469 452L480 463M469 456L478 465M467 457L477 467M464 458L475 469M29 483L16 496M24 481L12 492M22 477L9 489M476 215L476 232M472 213L471 232M467 213L467 232M463 212L462 232M458 211L458 231M236 241L248 244M236 246L246 249M234 250L245 254M232 255L244 258M232 260L242 263M248 243L242 264M548 131L543 140M545 129L540 138M542 126L537 136M538 125L533 134M535 123L530 133M547 137L530 128M13 169L30 170M13 172L30 173M370 147L357 162M367 145L355 160M364 144L352 158M363 140L350 156M363 159L352 150M310 22L317 36M306 23L314 37M314 28L310 30M315 31L311 33M173 468L182 476M171 473L179 479M168 476L177 483M166 480L174 486M163 484L171 490M360 154L341 155M362 150L341 152M361 146L341 148M358 143L341 144M346 157L345 142M348 155L347 143M333 254L318 255M334 251L318 251M332 247L318 247M329 257L329 245M326 255L326 246M17 379L13 399M14 379L10 398M17 386L10 385M16 393L9 391M331 56L321 57M327 53L320 54M326 49L319 50M326 46L319 47M326 42L318 43M322 58L319 42M324 57L321 42M126 210L119 217M125 207L117 215M353 152L362 161M349 153L359 164M345 155L357 167M345 160L354 170M363 160L352 170M361 156L349 168M136 197L139 216M133 198L136 216M469 423L460 426M469 421L459 424M466 418L458 421M465 416L457 418M462 426L459 417M384 500L380 513M381 498L377 512M385 504L377 501M6 464L6 480M2 466L2 480M498 4L493 10M494 3L490 8M436 434L436 447M433 437L434 447M430 435L431 447M428 435L428 447M489 379L485 392M483 379L480 391M479 376L475 389M489 384L477 381M489 381L477 378M391 188L406 199M386 190L404 203M393 187L388 194M468 48L465 64M463 48L460 63M458 49L456 63M469 52L455 50M219 525L238 529M218 529L237 533M216 532L236 537M215 536L235 541M237 271L223 272M240 268L223 269M239 265L223 265M238 261L223 262M236 258L223 259M196 315L185 320M195 311L183 317M195 308L182 314M191 306L180 312M157 275L147 290M152 274L143 287M150 271L140 285M543 60L531 72M539 57L528 69M537 52L524 65M534 49L521 62M542 65L528 51M566 122L565 134M562 124L562 134M559 121L559 134M498 81L496 90M494 82L492 89M491 80L489 88M488 80L486 87M470 465L486 478M469 469L484 481M466 472L482 484M479 472L474 478M178 276L160 280M178 272L159 277M172 278L171 273M178 279L176 270M179 259L187 264M179 263L185 267M175 264L184 270M176 268L182 273M72 455L89 460M72 459L89 463M70 461L88 466M81 456L79 465M508 274L517 289M502 273L513 292M500 279L509 294M494 279L505 296M511 277L497 285M544 75L537 83M540 74L534 80M538 70L532 78M543 77L536 72M82 532L92 532M84 535L92 535M83 538L92 538M80 541L92 541M90 530L90 544M142 208L131 214M140 204L129 210M137 200L126 206M133 197L124 202M131 192L122 198M326 38L344 44M324 42L343 47M331 39L330 45M328 37L326 45M344 51L352 58M341 52L349 60M338 54L347 63M347 51L340 58M345 50L339 56M576 241L590 245M576 246L588 250M573 250L587 254M573 255L585 259M85 20L75 37M83 17L72 35M80 14L68 33M75 14L65 31M204 55L215 56M203 58L215 59M204 61L214 63M207 55L207 62M232 375L226 385M226 375L222 383M223 370L217 381M218 369L213 379M215 366L209 377M29 48L41 56M27 50L39 59M27 54L37 61M25 56L35 64M36 50L28 61M49 369L47 380M46 370L44 379M306 283L293 285M304 279L292 281M304 286L303 277M298 285L297 280M164 316L169 325M160 318L165 327M155 320L161 329M151 321L157 332M146 323L153 334M168 320L149 331M577 188L583 194M573 189L581 196M571 193L578 199M522 139L519 156M518 139L515 155M514 139L511 155M511 138L508 154M522 147L508 144M466 163L465 178M461 160L461 178M457 160L457 178M453 160L453 178M466 166L453 166M2 321L16 328M-2 323L14 331M-3 327L12 334M-6 330L11 338M-5 334L9 341M5 320L-4 338M45 249L40 253M44 247L39 251M43 244L37 249M48 249L42 242M405 334L390 343M401 331L388 339M400 326L385 335M396 324L383 331M298 -1L313 5M297 2L312 8M298 6L310 11M306 1L302 9M309 3L306 9M9 220L21 225M7 222L20 228M7 226L18 231M3 228L17 234M5 232L16 237M21 222L13 239M350 534L356 548M346 536L352 549M343 540L348 551M414 9L423 29M411 10L420 30M410 15L417 32M406 14L415 33M403 16L412 34M422 23L408 30M418 14L404 21M85 531L75 548M81 529L71 545M77 527L67 543M295 250L308 259M293 253L306 261M293 256L304 264M289 258L303 267M298 250L291 262M308 256L300 269M65 163L79 167M65 168L78 171M64 172L77 176M77 164L74 177M75 162L71 178M236 253L229 269M232 253L226 268M230 250L223 267M41 489L58 493M39 493L57 498M44 488L42 495M56 490L54 499M253 299L247 318M248 300L242 317M243 298L238 315M253 305L240 301M7 447L-3 451M7 444L-4 447M26 524L35 538M22 526L32 541M149 347L133 347M149 342L133 342M146 349L146 339M460 455L477 462M458 458L476 465M456 462L475 469M520 37L516 55M517 37L513 55M519 54L511 52M583 2L589 13M579 5L585 15M167 324L150 330M168 319L149 326M167 315L148 322M163 312L146 318M162 308L145 314M23 139L34 155M23 143L32 156M26 142L23 144M30 145L24 149M489 29L503 32M491 32L503 35M490 34L502 37M239 188L233 197M235 186L229 195M520 454L534 459M519 458L532 462M518 462L531 466M516 466L530 470M524 455L520 468M524 454L519 468M83 309L95 323M80 313L91 326M78 318L87 329M243 113L237 121M240 111L234 119M237 121L234 118M192 514L194 525M190 516L192 525M186 513L189 526M196 521L186 523M195 523L188 524M461 115L476 123M460 120L474 127M530 7L537 17M527 9L534 19M124 206L142 207M124 209L141 211M123 213L141 214M122 216L141 218M120 220L140 221M125 205L123 220M132 427L150 429M132 431L150 433M132 435L149 436M133 439L149 440M137 425L136 441M328 165L321 174M324 162L317 171M329 168L321 161M214 49L216 62M212 52L214 63M208 51L211 64M215 52L209 53M90 359L75 370M88 354L72 366M84 351L70 362M82 346L67 358M68 118L60 120M70 113L59 116M248 471L237 474M246 469L236 471M248 465L236 468M578 16L594 27M578 20L592 29M575 23L591 32M589 21L583 30M582 18L578 25M516 388L517 408M512 388L513 409M519 408L511 408M207 475L224 481M206 477L224 484M204 479L223 486M57 250L51 262M54 246L47 260M52 262L47 260M58 251L51 249M133 524L142 526M132 527L141 529M133 531L141 532M130 533L140 535M133 524L131 534M139 386L142 408M135 391L137 408M574 528L584 532M572 531L583 535M571 534L582 539M581 530L577 537M129 66L145 73M127 71L143 77M124 74L142 81M123 78L140 85M122 83L138 89M579 175L578 185M576 175L574 184M434 230L427 234M434 227L426 231M431 225L425 228M435 231L431 224M435 230L432 224M359 146L368 162M357 148L365 164M354 149L363 165M352 151L361 166M350 153L358 168M362 150L351 156M389 191L384 204M386 188L381 203M384 186L379 202M249 528L259 533M247 533L256 537M186 389L169 398M183 388L168 395M184 384L167 393M172 398L168 391M536 445L545 450M534 449L543 453M61 310L49 320M58 308L47 318M58 314L54 309M247 437L263 443M247 441L262 446M246 444L260 450M263 442L259 451M259 439L255 450M34 307L47 313M34 312L45 317M32 315L44 320M30 318L42 323M30 322L41 327M39 309L32 324M42 310L35 326M108 497L120 502M105 499L119 505M104 501L118 507M114 497L110 506M119 502L117 507M273 21L266 24M272 19L265 21M273 16L264 19M272 23L270 17M91 495L76 497M91 490L76 492M90 485L75 487M89 496L88 484M90 496L88 484M332 9L319 18M330 7L317 15M327 4L315 12M325 2L313 9M325 -2L311 7M16 175L27 179M15 177L26 182M14 180L25 184M12 183L24 187M173 118L169 130M170 115L166 129M167 114L163 128M173 120L165 117M173 122L164 119M403 208L401 226M400 205L398 226M397 207L395 225M402 213L396 212M404 210L395 209M434 55L448 65M431 58L446 68M436 54L432 60M172 405L171 416M168 404L167 416M164 401L163 415M174 407L162 406M113 216L113 226M108 216L109 227M104 219L104 227M147 445L162 452M145 449L160 455M153 445L149 453M256 3L248 9M254 2L247 7M251 1L245 5M252 -3L244 3M249 -3L243 1M250 10L242 -1M344 437L349 448M339 438L344 450M335 443L340 452M145 402L145 417M141 401L142 417M138 401L138 417M135 403L135 418M147 413L133 414M517 357L510 360M517 353L508 355M517 348L507 351M515 344L505 347M518 358L513 343M225 156L236 163M223 159L234 166M221 327L224 338M217 329L220 339M531 480L540 480M531 484L540 484M532 478L532 485M537 479L537 485M360 15L355 22M357 12L351 19M355 8L348 17M352 5L345 14M456 402L463 412M451 403L458 415M448 407L454 417M444 410L450 420M439 410L446 422M461 405L440 417M462 410L444 420M185 408L185 418M183 407L182 418M118 405L114 417M114 404L110 415M111 402L106 414M594 271L590 281M590 272L587 279M587 270L584 278M585 267L581 276M582 266L578 275M414 95L399 105M412 92L397 103M409 91L395 100M407 88L394 97M405 86L392 95M411 99L402 86M400 105L392 94M52 146L71 149M50 151L70 154M205 339L192 344M206 333L190 340M204 329L188 335M200 325L187 330M200 320L185 326M195 345L187 324M168 450L186 451M169 454L186 454M167 458L186 458M173 450L173 458M176 450L175 458M260 193L247 197M259 190L246 194M256 195L254 191M257 188L267 192M254 191L265 196M251 194L263 199M261 188L256 198M571 355L572 375M567 358L567 375M563 357L563 375M559 356L559 375M555 355L555 376M61 452L51 459M59 449L49 456M57 446L47 453M203 339L192 350M201 334L188 346M197 347L192 341M318 10L315 22M313 9L311 21M308 8L306 20M318 14L307 12M319 17L304 15M192 523L187 535M190 520L184 533M187 517L180 531M192 528L182 523M193 522L186 518M92 89L105 91M93 93L104 95M95 89L94 94M102 90L101 95M537 99L520 107M535 97L519 104M533 95L518 102M530 93L517 99M529 90L515 96M524 107L518 94M284 416L289 429M280 419L285 430M275 421L281 432M271 423L276 434M290 425L273 432M285 416L270 423M19 178L29 191M17 181L26 193M28 189L24 192M351 436L335 437M350 431L335 432M349 439L348 429M337 438L336 430M458 185L442 190M459 180L441 185M453 187L452 181M457 187L455 179M246 290L233 299M245 286L231 295M243 282L228 291M239 280L226 288M238 275L224 284M245 294L233 275M506 320L490 323M508 317L489 319M509 313L489 316M505 310L488 313M505 307L488 309M497 323L494 307M137 528L142 541M136 530L140 542M133 530L137 543M130 529L135 544M128 532L132 545M140 529L127 534M20 469L18 486M16 468L14 485M12 468L10 485M9 469L7 484M5 466L3 484M22 466L26 480M17 466L21 481M13 471L16 482M8 470L12 483M4 474L7 484M24 467L2 473M24 472L5 477M435 74L449 75M435 77L449 78M436 80L449 81M436 83L449 84M434 86L448 87M447 73L446 89M154 272L147 276M153 267L145 271M150 263L142 267M149 258L140 263M145 254L137 259M366 70L377 82M364 74L374 84M378 80L373 85M371 75L368 78M349 337L342 341M348 332L339 338M346 329L337 334M346 323L335 330M342 321L333 326M371 160L380 171M370 164L377 173M366 163L375 175M377 167L371 171M283 137L297 140M282 141L296 144M282 145L295 148M291 137L288 148M121 475L119 489M117 474L115 488M113 475L112 488M110 472L108 487M107 472L104 487M207 394L202 405M203 392L198 403M199 391L194 402M575 166L568 182M572 164L565 180M569 162L562 179M566 161L559 177M561 162L555 176M574 170L560 164M113 477L101 482M111 473L100 478M109 469L98 474M145 420L136 428M142 417L133 425M139 415L130 422M137 410L128 419M135 408L125 416M138 429L125 414M299 19L291 22M297 14L289 17M294 21L292 16M471 330L462 334M469 327L461 330M469 323L460 326M468 319L458 323M360 465L370 476M357 467L368 478M354 468L366 481M363 465L356 473M369 471L360 479M19 87L11 93M16 85L9 91M14 83L7 89M11 82L5 86M419 474L436 481M420 478L435 483M419 481L434 486M415 482L433 489M415 486L432 492M433 478L427 492M430 476L424 491M212 325L216 341M208 325L212 342M204 325L208 343M216 329L203 332M213 325L204 327M223 388L220 397M221 386L217 396M218 386L215 395M559 400L574 402M557 404L573 407M561 398L559 406M570 400L568 407M501 516L493 525M499 514L491 523M497 512L489 521M496 509L487 519M492 509L485 517M502 519L490 507M525 406L511 415M522 403L509 411M520 399L506 408M515 396L504 404M268 25L264 37M264 26L260 36M267 36L259 33M268 29L263 27M59 424L45 428M61 420L44 425M56 418L44 422M56 426L54 418M55 428L52 417M64 215L70 228M63 220L68 229M68 220L63 222M192 40L177 49M190 36L174 45M190 30L172 41M189 43L183 32M571 231L554 235M572 226L553 231M569 223L552 227M570 218L551 223M556 235L553 222M533 187L550 195M531 191L548 199M530 195L546 203M526 198L544 207M538 188L531 202M274 359L265 364M272 357L264 362M269 356L262 359M268 353L261 357M266 365L260 356M327 34L314 47M323 32L311 44M321 29L308 41M317 27L305 38M315 22L302 35M46 429L59 435M42 432L57 439M42 437L55 443M40 440L54 446M36 443L52 450M55 433L48 449M223 463L206 464M221 459L206 460M223 455L206 456M219 466L218 452M144 -5L150 3M142 -2L148 5M140 -0L145 7M136 0L143 9M148 -1L139 6M146 -5L136 3M271 198L271 212M268 197L268 212M273 205L266 205M467 134L462 145M464 132L459 144M461 129L455 142M465 142L455 137M250 205L249 212M246 203L246 212M243 202L242 212M239 204L239 212M236 203L235 211M250 209L235 208M445 45L428 49M445 41L427 45M445 37L426 41M442 33L425 37M440 29L424 33M213 380L204 391M209 380L201 388M208 375L198 386M211 385L203 378M521 220L510 221M522 217L510 218M512 223L512 216M519 221L519 217M58 386L52 394M55 383L49 392M52 380L45 389M48 379L42 387M58 390L45 380M507 327L520 336M505 330L518 339M503 334L516 343M517 332L511 341M24 446L6 454M22 442L4 451M19 439L2 447M12 452L8 444M236 482L230 490M231 481L227 487M229 477L223 484M348 50L352 62M344 52L348 64M341 56L344 65M424 379L421 396M421 378L418 396M418 381L416 395M415 377L413 395M413 377L410 394M426 381L410 379M424 385L410 383M142 182L123 184M142 177L123 179M141 172L122 174M140 167L122 169M137 163L121 164M136 183L134 163M130 184L128 163M455 503L458 517M451 501L456 517M449 504L453 518M459 513L450 515M458 505L448 508M67 364L53 376M65 359L51 373M349 170L356 190M346 173L352 191M343 176L348 192M355 179L343 183M352 176L343 179M38 133L21 135M36 129L21 131M31 134L31 129M37 133L36 129M394 480L396 495M391 481L393 496M388 479L390 496M385 482L387 497M228 41L243 45M226 43L242 47M226 46L242 50M224 48L241 52M530 469L515 472M530 464L514 467M530 460L513 463M516 474L514 460M526 472L523 458M75 283L67 283M74 279L67 280M75 284L75 278M73 285L73 278M65 261L72 274M60 263L68 276M66 259L58 264M452 247L434 249M448 244L434 246M440 250L439 243M588 529L589 536M585 531L587 537M582 529L584 538M580 531L582 538M564 239L572 242M562 241L571 245M559 242L570 247M568 240L565 245M569 238L565 247M244 520L240 528M239 519L236 526M235 516L232 524M231 515L228 522M227 513L223 520M243 523L225 515M395 332L402 339M393 335L400 341M390 337L397 344M387 339L395 346M384 341L392 349M127 294L111 297M128 289L110 293M127 285L109 289M127 280L108 284M126 276L107 280M124 296L120 276M114 300L109 277M72 288L77 299M68 291L72 301M74 292L69 294M480 520L466 523M481 516L465 520M479 513L464 516M479 510L464 513M473 523L470 510M544 178L534 184M543 174L532 180M539 172L530 177M538 168L528 173M556 186L542 193M555 182L540 190M21 25L21 43M17 23L17 43M24 27L14 27M23 28L16 28M505 380L500 397M500 378L495 396M496 378L491 394M501 397L489 393M501 395L491 392M30 179L34 198M28 179L31 198M25 180L29 199M32 183L25 184M534 406L523 413M533 404L521 411M531 402L520 408M531 399L518 406M528 397L517 403M50 475L56 480M47 477L53 483M46 481L50 486M56 477L47 486M52 475L45 482M292 334L294 349M287 333L289 350M282 336L284 350M295 349L282 350M28 474L33 484M24 477L29 486M21 481L25 488M17 483L21 491M13 486L17 493M33 481L15 491M322 224L312 239M319 222L309 236M315 220L305 234M313 217L302 232M308 217L299 229M425 345L431 349M420 346L429 352M422 350L428 354M420 352L426 356M417 353L425 358M427 344L418 357M429 345L420 359M219 497L221 508M216 496L218 509M213 498L215 509M222 506L213 507M221 508L215 509M306 161L313 174M303 164L308 176M297 165L304 178M94 187L97 204M89 188L93 205M84 187L88 206M79 190L83 207M74 189L78 208M95 188L74 193M357 100L346 117M354 98L343 115M351 96L340 113M349 117L338 110M304 192L312 208M301 193L309 209M298 195L307 211M295 196L304 212M21 503L21 517M17 503L17 517M12 505L12 517M8 505L8 517M3 505L3 517M24 507L1 507M399 300L400 319M395 302L395 319M401 315L393 315M400 318L394 318M29 350L23 357M28 346L21 355M26 344L18 353M259 509L258 520M255 509L253 519M250 507L249 518M246 507L244 518M262 515L242 512M261 520L241 517M320 226L311 238M317 225L308 236M315 221L306 234M314 218L303 232M317 230L309 224M423 313L420 326M419 312L415 325M414 311L411 323M20 532L9 548M19 529L7 546M17 527L4 544M13 527L2 542M10 525L-1 540M21 535L7 525M20 535L8 526M552 481L548 491M549 480L545 490M546 477L541 488M542 477L538 487M540 474L535 486M551 486L536 480M352 202L370 204M350 204L369 207M360 202L360 206M206 323L212 331M203 324L209 333M199 324L206 335M449 329L462 337M446 332L460 340M443 334L458 344M566 442L578 446M566 447L576 451M564 451L574 455M563 456L573 459M404 17L407 30M400 18L403 30M398 20L400 31M395 21L397 32M406 20L394 23M407 20L393 23M375 198L363 210M374 195L361 208M371 193L359 206M226 448L215 458M224 444L212 455M219 442L209 453M219 438L207 450M229 449L216 436M216 457L208 449M284 122L279 129M283 119L276 128M280 118L274 126M278 116L272 124M284 127L273 118M132 237L142 241M132 240L141 244M130 243L139 246M128 245L138 249M139 239L135 249M65 491L84 495M67 496L83 499M65 500L82 503M572 373L577 386M570 376L574 387M567 377L571 388M564 376L568 389M562 380L565 390M578 381L561 387M577 379L561 384M37 61L43 66M33 63L41 69M32 66L39 72M44 64L37 73M546 101L558 103M543 105L557 108M544 110L556 112M544 114L555 117M541 118L554 121M549 99L544 122M115 255L100 260M114 252L99 257M112 250L98 254M111 246L97 251M105 262L100 247M391 433L373 441M387 429L371 437M385 425L369 433M388 437L382 423M10 390L9 398M7 390L6 397M4 390L3 397M319 272L327 283M315 272L324 285M313 276L321 287M311 278L318 289M307 279L315 291M529 360L524 380M526 362L521 379M135 310L122 319M131 307L119 315M129 303L116 312M125 299L114 308M540 17L553 26M537 21L550 30M534 24L548 34M532 28L545 37M551 22L540 37M278 54L291 55M277 57L290 58M280 60L290 61M413 29L400 30M412 25L400 26M408 32L407 23M401 32L400 25M421 376L409 380M423 371L408 377M422 368L406 373M418 365L405 369M415 379L411 367M128 56L144 58M128 59L144 60M129 62L144 63M126 64L143 66M222 0L214 12M219 -2L210 10M215 -4L207 7M213 -9L204 5M501 471L497 479M497 469L493 477M493 468L489 475M490 464L486 473M486 462L482 472M502 475L481 466M258 532L277 536M256 536L276 540M260 532L259 537M265 531L263 540M470 357L470 372M468 358L467 372M465 358L464 371M462 357L462 371M459 355L459 371M488 96L480 99M489 92L478 96M487 89L477 93M486 97L483 90M488 96L485 89M142 36L138 47M138 38L135 46M136 33L132 45M143 40L133 36M142 43L131 40M499 113L505 123M496 116L501 125M492 118L498 127M490 122L494 129M486 124L490 132M238 12L251 13M239 15L251 15M237 18L251 18M235 21L251 21M251 12L251 21M245 10L244 23M157 294L147 300M158 289L145 296M153 287L143 292M151 284L141 289M149 280L139 285M154 298L144 280M43 362L29 364M42 358L28 361M41 354L28 357M43 350L27 353M41 347L26 350M41 364L37 345M37 363L34 348M310 154L318 162M309 157L316 164M307 159L314 166M304 161L311 169M302 164L309 171M318 158L305 170M313 154L302 166M195 403L208 405M194 407L207 409M194 411L207 413M537 528L525 540M537 523L524 538M533 524L522 537M532 521L520 535M531 520L518 533M117 304L103 318M114 304L102 316M109 29L96 31M109 26L95 28M111 23L95 25M98 32L97 23M105 31L104 22M231 335L227 344M228 333L224 342M224 333L220 340M363 209L374 221M361 213L371 224M357 213L369 226M356 216L367 228M48 87L48 96M44 87L44 96M40 87L40 96M308 137L315 149M305 137L312 150M301 137L310 152M537 321L526 331M537 316L524 329M534 313L521 326M536 324L528 316M530 332L520 322M435 117L449 121M432 120L448 124M431 123L447 128M431 126L446 131M440 117L437 129M120 18L109 34M116 16L106 31M114 13L102 29M110 11L99 26M123 402L131 409M122 406L129 412M120 409L127 415M117 412L124 418M411 343L412 355M406 341L408 356M401 344L403 357M243 209L246 219M239 210L242 221M235 211L238 222M231 213L234 223M227 214L229 224M554 122L556 132M551 123L553 133M548 126L550 134M545 126L546 134M557 128L544 130M558 127L543 130M485 475L471 478M484 472L471 475M484 469L470 471M483 466L470 468M484 476L482 466M474 156L484 167M469 157L481 169M468 162L479 172M465 164L476 175M463 168L473 177M483 163L469 177M483 163L469 176M126 292L119 305M123 291L116 303M125 295L121 293M110 468L102 470M110 465L102 467M103 470L102 467M199 313L189 324M198 310L187 322M195 310L185 320M305 9L312 28M302 11L308 29M455 546L449 547M458 543L448 544M452 547L452 543M456 549L455 540M160 359L139 361M156 356L139 358M156 353L139 355M141 361L140 354M140 362L139 353M470 445L490 446M469 450L490 450M469 454L490 454M471 443L471 456M115 397L100 404M111 395L99 401M105 404L101 398M102 404L100 400M293 296L292 306M289 296L288 305M284 296L283 305M280 294L279 305M20 492L12 508M16 491L9 506M13 489L6 505M10 488L2 503M7 484L-1 501M577 537L579 547M572 537L574 548M568 540L570 549M563 539L565 550M578 539L562 543M579 540L562 544M501 75L520 81M503 81L519 86M405 377L417 390M403 381L414 393M417 390L413 393M417 388L412 393M55 254L64 260M52 257L62 263M49 259L59 266M49 264L57 270M57 255L50 266M116 416L102 428M113 414L100 425M56 303L47 312M56 299L45 310M51 298L42 308M50 295L40 305M56 305L47 296M117 20L134 22M118 23L134 24M117 25L134 27M116 28L134 29M117 30L133 32M132 20L130 34M565 66L557 81M563 63L554 79M559 63L550 77M557 60L547 75M553 58L544 74M7 207L1 218M4 203L-2 216M4 214L-1 211M111 506L102 507M110 503L102 504M111 500L101 501M109 497L101 498M110 494L100 496M110 507L108 493M113 505L111 494M163 447L159 454M159 444L155 452M164 450L156 446M164 450L155 445M562 2L576 9M561 5L574 12M561 9L572 15M559 12L571 18M576 8L570 19M572 5L566 17M313 164L305 167M313 160L304 164M310 157L302 161M307 155L301 158M307 151L299 155M313 166L306 150M501 94L488 97M501 90L487 92M500 85L486 88M495 97L493 85M213 23L221 32M211 25L219 34M209 26L217 36M218 26L212 32M219 26L211 32M191 226L199 245M187 227L195 247M195 231L187 234M195 229L186 232M409 528L427 538M409 533L424 541M406 536L422 545M404 540L420 549M403 545L418 553M421 534L412 550M219 536L221 544M215 538L217 546M210 538L213 547M205 539L208 548M223 543L206 548M221 538L206 543M32 393L24 400M29 392L22 398M28 390L21 396M31 398L24 390M138 389L142 408M134 390L138 408M140 397L136 398M9 438L20 450M6 439L18 452M11 437L6 442M339 226L339 241M335 224L336 241M332 228L333 241M329 225L330 241M352 41L345 52M348 42L342 50M83 28L95 45M82 32L93 46M78 32L90 48M78 36L88 50M93 37L81 45M91 38L82 44M128 268L130 288M124 270L125 288M119 272L121 289M114 270L116 289M110 272L112 290M132 281L109 283M130 281L110 283M231 186L246 192M227 190L244 197M228 196L243 201M225 200L241 206M222 204L239 210M246 191L238 211M490 445L505 456M486 446L503 458M366 421L382 422M364 425L381 426M363 430L381 431M365 435L381 436M369 420L368 436M367 420L366 436M19 252L19 265M15 255L15 265M21 265L12 265M20 258L14 258M59 375L76 381M59 379L74 384M59 382L73 387M56 385L72 390M69 378L66 388M73 377L69 391M14 447L32 448M14 452L32 453M151 408L150 421M148 408L146 420M144 409L142 420M141 405L139 419M151 420L138 418M150 416L139 414M124 256L120 265M122 254L117 264M119 254L115 262M116 252L112 261M114 249L109 260M127 257L111 250M544 112L531 112M543 109L531 109M544 106L531 106M542 102L531 102M535 114L534 100M583 347L586 355M579 347L583 356M576 350L580 358M573 351L577 359M569 351L573 360M584 348L570 355M315 471L305 471M312 467L304 467M312 463L304 463M313 459L304 459M585 118L577 131M580 118L573 129M579 131L572 127M106 525L113 534M104 528L111 537M101 531L108 539M40 191L55 192M41 195L55 196M94 259L102 271M91 260L99 273M88 264L95 275M86 267L92 277M81 266L89 279M102 269L87 278M103 372L88 377M100 370L87 374M99 376L96 368M16 183L21 192M12 184L17 194M8 188L13 196M4 189L9 199M0 192L5 201M21 186L0 198M22 188L2 200M413 261L424 269M410 265L422 273M407 268L419 277M407 274L417 281M166 464L170 480M163 463L167 481M161 465L165 481M159 467L162 482M156 466L159 482M366 122L379 134M362 124L376 137M361 128L373 140M358 131L370 143M354 133L367 146M374 126L359 141M564 389L576 401M560 391L573 404M565 388L560 393M129 463L119 465M130 458L118 461M129 454L117 457M126 450L116 453M123 465L120 451M378 264L366 276M375 261L363 273M389 146L370 157M385 143L368 153M380 153L376 146M374 158L369 149M562 413L577 426M562 417L575 428M561 420L573 430M558 421L571 432M572 420L565 429M264 64L274 82M263 67L272 83M259 67L269 84M258 69L267 86M255 78L264 86M250 79L261 89M342 288L353 290M342 293L353 294M341 297L352 298M341 301L352 302M349 287L346 304M384 148L392 149M382 152L391 153M384 156L390 157M379 160L389 162M382 165L388 166M384 147L380 165M390 148L386 166M300 534L306 541M297 537L303 544M302 535L297 539M304 533L296 540M500 263L512 267M499 265L512 269M496 267L511 272M495 269L510 274M59 321L44 331M59 316L42 328M47 330L44 326M56 326L51 319M141 450L146 461M138 451L143 462M134 451L139 463M572 490L562 495M572 487L560 493M566 494L564 490M271 125L262 129M269 122L261 126M270 118L260 123M268 127L265 120M269 129L264 118M168 258L178 269M165 261L174 272M171 258L165 263M74 224L71 239M69 226L67 239M65 224L63 238M383 323L364 325M381 319L364 321M381 316L364 317M382 312L363 313M382 325L380 310M449 244L460 250M445 247L459 253M39 267L28 270M35 264L27 266M37 270L35 262M156 82L166 89M153 86L164 93M153 92L161 98M168 87L159 100M333 49L339 54M330 52L336 57M325 54L333 61M336 48L327 59M334 49L327 56M82 388L74 394M80 386L72 392M78 383L71 389M78 379L69 387M76 378L67 385M76 394L67 383M76 395L66 382M70 253L70 271M66 253L66 271M62 254L62 271M12 306L15 314M8 308L11 316M16 311L8 314M482 374L486 384M478 376L482 386M488 384L480 387M177 458L170 468M174 454L166 466M169 452L162 463M165 451L158 461M176 459L164 451M177 459L163 451M282 107L272 111M281 103L271 107M282 110L278 101M197 130L210 140M194 133L207 143M194 137L205 146M208 240L205 257M204 242L201 257M201 239L198 256M198 239L195 256M195 238L192 255M209 251L190 248M205 257L191 255M562 331L543 331M562 327L543 327M561 322L543 322M560 318L543 318M562 314L543 314M110 506L122 519M106 507L120 521M104 508L118 523M101 510L116 525M99 512L114 527M112 507L102 516M105 449L117 452M106 454L116 457M103 458L115 461M103 462L114 466M101 467L112 470M107 448L101 468M114 450L109 470M244 113L252 114M242 117L252 118M240 121L251 123M239 126L251 127M220 126L208 134M218 122L206 131M214 121L204 128M212 117L201 125M212 113L199 122M208 135L199 122M218 127L209 115M419 456L409 465M417 453L407 461M411 467L405 459M117 36L114 46M112 33L109 44M108 31L104 43M571 24L573 30M567 24L569 31M563 24L565 32M559 24L562 33M555 25L558 34M574 27L556 32M571 23L556 27M163 212L157 226M161 209L154 225M158 207L150 223M162 218L154 214M460 204L452 220M456 204L449 218M455 199L446 217M451 198L443 215M448 352L458 355M448 356L457 359M444 360L456 363M444 364L454 367M458 353L453 368M457 352L452 369M290 207L274 218M288 204L272 214M285 201L269 211M283 197L267 208M281 194L265 204M278 217L267 201M245 199L254 213M242 200L251 214M248 198L240 202M121 456L132 463M120 460L130 466M117 463L127 470M481 108L488 112M478 109L487 114M475 111L485 117M474 114L484 119M538 482L542 492M535 482L539 493M532 484L535 494M529 486L532 495M526 487L529 496M62 376L66 392M58 373L63 393M56 376L60 394M67 391L58 393M64 376L54 378M185 24L171 32M182 23L170 29M184 25L182 22M547 161L543 172M543 158L539 171M549 162L541 159M548 160L542 158M382 154L399 155M384 158L399 158M381 161L398 162M383 165L398 166M383 168L398 169M385 153L384 169M396 152L395 172M261 273L269 289M259 277L266 290M267 285L264 286M265 280L261 282M240 189L243 195M238 189L240 196M585 166L573 167M582 161L572 162M584 156L572 157M575 169L574 155M575 169L574 155M48 523L37 525M45 520L36 522M46 517L36 518M39 525L38 518M46 525L44 516M143 161L150 167M139 161L148 169M137 163L147 171M138 167L145 173M134 167L143 175M147 163L138 172M59 374L69 384M58 379L66 387M68 380L62 385M111 536L125 548M110 539L123 550M107 540L121 552M105 542L119 555M123 546L116 553M556 473L546 477M555 470L545 474M553 467L544 471M551 477L547 467M228 324L225 341M224 323L221 341M105 63L103 70M101 60L98 69M96 59L93 67M103 69L94 66M104 69L93 65M390 213L376 214M388 209L376 210M384 215L383 208M389 214L389 208M190 400L171 407M189 397L170 404M187 395L170 402M184 404L181 395M354 48L343 51M354 45L342 48M352 42L342 45M352 39L341 42M408 492L400 499M409 487L398 497M89 377L100 391M86 379L97 394M81 381L94 396M79 384L91 399M347 296L361 299M347 300L361 303M345 303L360 306M345 307L359 310M356 296L353 310M500 457L494 466M497 454L491 463M494 450L487 461M490 448L483 459M485 447L479 456M497 466L478 454M386 301L382 308M382 300L379 306M533 344L537 352M530 345L534 354M527 347L531 355M523 348L528 357M520 349L524 358M492 529L503 532M490 533L502 536M489 536L501 540M494 221L497 233M490 221L493 234M500 231L490 234M88 250L98 262M86 252L96 264M83 254L93 266M95 257L90 262M96 255L87 263M189 516L205 525M190 520L204 528M189 523L203 530M201 521L196 528M206 522L201 532M429 4L426 22M425 6L422 22M421 5L418 21M417 2L414 20M413 5L410 20M432 8L410 5M116 187L116 199M111 188L111 199M117 191L110 190M443 406L446 423M440 409L442 424M436 407L439 424M433 409L436 425M445 410L433 412M446 413L433 416M144 440L132 446M142 437L130 443M142 443L139 437M233 50L249 57M232 55L247 61M230 59L245 65M230 64L244 69M225 67L242 73M236 51L228 69M244 54L237 72M429 292L413 298M426 288L411 294M423 284L410 289M423 279L408 285M421 296L416 281M426 294L420 279M487 323L482 331M484 320L478 328M479 319L474 325M475 316L471 323M474 311L467 320M442 429L458 435M440 431L457 438M438 433L455 441M438 437L454 444M452 430L446 444M166 443L166 460M161 443L161 460M156 442L156 460M167 456L155 455M309 223L325 234M307 226L323 237M317 228L314 232M320 227L315 234M86 32L71 37M86 29L70 34M82 27L69 31M82 24L68 28M82 21L67 25M457 355L456 370M452 356L451 370M447 356L446 369M517 48L515 57M515 46L512 57M512 49L510 56M244 223L251 230M239 225L247 233M236 228L244 237M234 233L241 240M246 221L232 235M247 223L234 236M322 240L314 241M321 236L313 237M323 232L313 233M320 243L319 230M320 242L319 231M159 438L162 452M156 439L159 453M153 438L157 453M151 438L154 454M99 -3L98 5M94 -5L93 5M89 -4L88 4M84 -5L83 4M331 210L340 226M328 212L338 227M326 214L336 229M527 151L516 161M521 149L513 158M396 274L404 278M396 278L402 281M395 281L401 284M403 277L399 284M552 165L563 173M551 169L561 176M550 173L559 179M547 176L556 182M563 172L556 182M554 166L547 176M98 240L87 251M98 237L85 249M94 237L83 247M93 234L81 244M96 244L89 236M9 343L4 350M6 343L1 349M5 339L-1 347M10 344L3 340M542 470L535 478M541 465L531 475M541 473L536 469M241 75L224 76M243 70L224 72M242 66L223 67M234 78L233 64M582 99L572 113M581 95L569 111M582 103L576 99M581 101L577 99M111 413L95 416M107 409L94 412M217 17L208 21M215 14L207 18M215 10L205 15M213 7L204 12M211 4L202 9M217 20L209 2M391 82L386 101M388 84L383 100M385 83L381 100M123 362L116 371M120 362L114 369M117 371L114 368M122 364L119 361M313 197L303 205M312 194L301 202M309 191L298 199M305 189L296 196M302 186L293 193M306 204L295 190M304 206L293 191M236 125L229 131M235 121L226 128M233 118L224 125M235 129L227 119M236 125L231 119M230 350L213 355M226 347L212 352M495 418L477 424M493 414L475 420M494 421L491 412M171 252L155 261M170 249L154 258M168 255L165 251M187 248L179 257M184 247L177 255M184 244L175 254M182 242L173 252M180 240L171 250M184 255L173 245M542 540L538 548M539 536L534 546M540 545L535 542M540 546L534 543M426 433L433 444M423 435L429 447M419 438L426 449M414 437L422 451M21 407L36 417M22 412L34 419M21 414L33 422M18 416L31 424M16 419L30 427M24 408L16 421M243 509L254 516M241 513L251 520M247 511L244 516M254 513L248 521M208 526L208 543M205 529L205 543M202 529L202 543M200 527L199 543M416 306L419 314M413 306L417 315M410 304L414 316M408 307L411 317M405 308L408 318M421 312L406 317M484 259L479 270M481 255L475 269M477 255L472 267M474 252L468 266M470 252L464 264M433 402L442 404M432 405L442 407M432 408L441 410M429 410L441 413M433 401L431 411M435 399L432 414M198 323L181 327M194 321L180 324M195 318L180 321M169 380L166 393M165 379L162 392M161 379L158 391M251 163L235 165M253 160L234 161M227 345L211 355M225 343L210 353M225 340L208 351M223 338L207 349M25 193L25 206M21 195L20 206M16 194L15 205M26 195L15 195M139 70L139 87M136 71L136 87M141 82L134 82M140 82L135 82M102 425L113 430M101 428L112 433M102 422L99 429M290 180L284 193M285 179L280 191M285 192L280 189M22 418L14 430M19 416L11 429M15 415L8 427M12 414L5 425M9 411L2 423M18 425L4 417M284 139L299 154M282 144L296 157M277 146L293 160M274 150L289 164M271 153L286 167M291 144L276 160M292 146L278 162M386 159L376 163M388 155L375 161M385 154L374 158M383 152L373 156M378 165L373 154M389 161L384 148M68 331L72 341M65 329L69 342M63 332L66 343M74 338L63 342M19 351L13 368M15 350L9 366M12 348L6 365M16 361L8 358M539 99L527 114M537 96L525 112M535 94L522 110M530 94L519 108M534 109L523 101M77 522L74 532M73 521L70 531M70 517L66 530M121 167L125 185M117 170L121 186M113 171L117 187M521 78L512 81M522 74L511 77M521 70L510 74M517 67L509 70M518 80L514 68M391 269L405 271M391 272L405 274M393 268L392 273M192 353L183 363M190 350L180 360M187 348L178 358M187 342L175 355M193 356L181 345M189 357L180 349M323 266L341 269M324 270L340 274M328 264L326 274M332 265L331 274M382 247L382 268M379 247L379 268M376 248L376 268M372 248L372 268M369 248L369 268M384 249L368 249M384 261L367 260M550 192L567 192M550 196L566 197M552 201L566 201M550 206L566 206M553 210L566 210M280 116L272 122M278 114L270 119M279 109L268 117M271 375L258 383M266 372L256 379M263 369L253 375M262 364L251 371M318 193L316 208M314 190L312 207M310 191L308 207M306 191L304 206M302 190L300 206M263 491L254 495M260 489L253 492M258 487L252 490M258 483L251 487M256 481L249 484M256 495L250 483M39 347L48 361M35 349L44 364M31 352L40 366M27 355L36 369M24 359L32 371M44 351L25 363M48 358L29 370M95 521L102 538M90 522L98 540M86 524L94 542M82 527L90 544M77 527L85 546M104 536L83 546M128 134L121 142M128 130L119 140M126 128L116 137M122 128L114 135M204 241L213 247M202 245L210 250M199 248L207 254M208 240L200 251M61 10L50 15M62 6L49 13M61 3L48 11M56 3L46 8M56 -0L45 6M52 16L46 3M55 15L48 2M122 432L113 437M120 428L111 434M120 424L109 431M121 434L115 426M121 433L116 426M116 428L127 437M115 431L125 439M110 431L123 442M122 430L115 438M121 432L117 438M207 229L194 239M204 226L192 236M203 221L189 233M198 219L186 230M197 215L183 226M199 237L186 222M467 240L476 244M463 241L475 247M463 245L473 250M397 151L401 161M392 150L397 163M388 152L393 164M384 153L389 166M382 158L386 168M140 317L123 319M139 314L123 316M139 320L138 311M125 321L124 314M366 321L377 327M364 325L374 331M362 330L372 335M367 321L362 331M377 325L371 337M308 3L295 5M307 0L295 3M308 -3L294 -0M306 -5L294 -3M308 4L306 -6M305 4L304 -5M348 48L349 57M345 47L346 57M341 48L343 58M351 54L340 55M350 54L341 56M91 478L83 492M88 476L80 490M85 475L77 489M84 472L75 487M82 470L72 486M389 219L376 230M387 216L373 227M389 222L384 216M386 225L381 219M327 524L337 531M327 528L335 534M324 531L333 537M323 534L331 540M511 541L500 548M508 538L498 544M506 534L496 540M503 531L494 536M509 543L502 531M505 547L497 532M302 467L290 475M299 463L288 472M298 459L285 468M295 455L282 464M295 473L287 460M300 470L291 457M125 135L127 147M121 133L124 147M118 135L120 148M115 134L117 148M111 134L114 149M127 145L113 147M126 134L111 136M94 265L106 281M91 268L103 283M87 271L100 286M84 274L96 289M214 218L229 225M214 223L227 229M212 227L225 233M209 231L224 237M206 235L222 242M221 219L212 240M222 221L214 239M570 455L560 458M569 451L559 454M467 196L479 204M467 200L476 207M464 203L474 210M471 196L464 206M479 201L471 211M466 251L460 263M463 248L457 261M462 263L456 259M465 257L459 254M571 54L550 60M567 52L550 57M566 49L549 54M568 46L548 51M566 43L547 48M552 59L549 47M227 460L228 474M225 462L225 474M222 460L222 474M219 459L219 474M216 462L216 474M229 467L215 467M229 464L214 464M324 40L316 45M322 37L314 42M185 421L169 430M184 419L168 428M182 417L166 426M48 434L57 448M44 437L53 451M40 440L49 454M34 440L45 456M31 444L40 459M55 444L38 456M55 443L37 456M328 177L326 185M324 174L321 184M124 512L129 522M121 514L126 524M117 514L123 525M125 513L118 517M237 215L248 225M233 218L245 228M232 222L242 231M229 226L239 235M239 214L227 227M203 90L212 106M200 94L208 108M194 94L204 111M190 95L200 113M211 100L195 109M211 102L196 110M112 372L98 388M109 369L95 385M104 368L91 382M101 364L88 379M97 361L84 375M482 282L467 289M479 281L466 286M479 278L465 284M480 275L464 282M474 288L469 277M469 288L466 281M189 222L192 229M185 222L188 231M194 228L186 230M476 102L473 109M472 100L469 107M469 95L464 105M465 93L460 103M291 376L283 385M289 375L281 383M287 373L279 381M291 380L284 373M179 52L177 61M177 49L174 60M174 49L172 59M171 51L169 58M169 48L166 58M179 57L166 54M179 56L167 52M353 96L342 102M350 94L340 99M350 90L339 97M348 88L337 94M351 100L345 87M318 539L327 553M313 540L323 555M310 542L319 558M325 547L315 554M325 548L315 554M266 300L280 311M263 301L278 313M263 304L276 315M260 306L275 317M268 301L262 308M466 211L472 216M462 213L469 219M462 218L467 222M459 220L465 225M471 212L460 225M466 210L458 220M127 360L139 375M124 364L136 378M131 362L124 368M136 369L130 374M544 437L558 451M543 439L556 453M542 442L554 455M541 445L552 457M539 447L551 458M550 442L541 450M317 355L331 363M314 358L329 367M310 361L326 371M311 366L324 374M330 362L324 374M325 359L318 371M354 93L367 94M350 97L367 99M353 102L366 103M349 107L366 108M252 363L238 365M249 360L238 361M240 367L239 358M242 367L241 358M362 249L352 256M359 246L350 253M356 243L347 249M100 348L115 353M99 350L115 356M98 353L114 358M102 346L99 356M99 347L97 353M32 43L23 46M32 40L22 43M26 47L24 40M140 363L156 372M135 365L154 376M134 370L151 380M132 374L149 384M130 378L147 388M154 371L145 387M148 367L139 384M473 304L489 305M471 307L489 308M317 249L326 250M316 252L325 254M314 256L325 257M315 259L324 261M304 267L320 271M303 269L319 273M305 273L319 276M301 275L318 279M301 277L317 282M309 265L305 281M184 -8L196 -3M181 -6L195 -0M180 -3L194 3M180 1L193 5M177 3L192 8M233 264L215 268M233 260L214 264M232 256L214 261M230 253L213 257M229 249L212 253M219 268L215 251M233 265L229 248M570 132L569 144M566 130L565 143M561 132L560 143M556 130L556 143M552 132L551 143M573 137L549 135M443 404L455 421M439 406L451 423M437 411L448 426M449 412L442 418M167 222L180 224M167 224L180 226M165 227L179 229M143 371L140 379M141 368L137 378M138 368L134 377M135 366L132 376M132 365L129 375M144 372L131 367M143 378L128 372M509 381L516 385M507 383L515 387M505 385L513 389M505 388L512 392M503 390L511 394M512 382L507 392M515 381L508 395M430 118L424 125M426 116L421 123M424 113L418 120M421 110L415 117M428 121L418 113M428 124L415 113M542 390L545 403M538 392L542 404M544 391L537 393M381 368L385 378M378 368L382 380M374 369L379 381M372 373L375 382M229 405L212 407M228 400L212 403M226 405L226 400M265 430L264 442M260 431L259 441M256 430L255 441M251 428L250 441M247 428L246 440M266 441L243 439M266 439L245 438M266 52L280 57M265 56L279 61M264 60L278 64M262 62L277 68M374 262L366 280M370 260L362 279M366 259L359 277M362 257L355 276M358 256L351 274M374 264L357 257M430 296L432 311M428 298L429 311M425 298L426 311M435 308L423 309M432 310L426 311M558 348L558 362M554 346L554 362M550 346L550 362M559 352L549 352M558 354L550 354M568 507L578 518M566 511L575 521M564 515L572 524M560 517L569 527M558 521L566 530M438 61L420 65M435 58L420 61M428 65L426 58M424 65L423 59M384 1L374 15M381 -2L371 12M378 -3L368 10M377 -8L365 8M373 -10L361 5M380 9L366 -2M377 12L363 1M415 171L430 179M412 175L428 183M410 179L425 187M409 184L423 192M404 187L421 196M216 308L214 316M212 307L210 315M207 306L205 314M203 302L200 312M214 315L201 311M404 217L422 219M403 219L422 221M401 222L421 224M403 225L421 227M403 228L421 230M54 494L44 496M53 490L43 492M53 495L52 489M286 237L286 245M283 234L282 245M558 369L570 374M559 374L569 378M555 376L568 381M568 372L565 381M407 40L394 50M408 36L393 48M205 289L209 307M202 288L206 307M207 290L201 291M207 292L202 293M366 129L355 131M365 126L355 128M365 123L354 125M138 259L120 263M138 255L119 259M136 252L118 256M134 248L118 253M137 244L117 249M287 202L273 214M285 197L270 211M282 194L267 207M276 215L267 204M288 204L279 193M154 56L159 65M150 58L155 67M147 62L151 69M15 327L31 328M13 332L31 332M16 336L31 337M12 341L30 342M23 327L22 341M246 197L250 208M242 199L246 210M250 201L242 205M492 213L499 224M489 216L495 226M487 220L492 228M501 222L489 230M498 217L486 225M208 278L194 289M204 276L192 285M200 273L189 281M198 269L186 278M194 266L184 274M203 284L191 267M206 282L193 265M207 220L196 232M206 217L194 230M202 216L191 228M124 471L133 484M123 475L131 486M500 533L487 547M499 528L484 544M496 526L481 541M493 523L478 538M498 539L485 527M207 493L226 502M205 495L225 504M207 499L224 506M205 500L223 508M206 504L222 511M171 32L172 48M168 32L170 48M166 33L167 48M163 34L164 48M160 33L161 49M174 39L158 41M174 33L157 34M74 154L60 164M75 148L57 161M72 145L55 157M67 143L52 154M65 139L50 150M45 539L42 548M40 538L38 547M36 538L34 545M489 526L478 529M489 523L477 525M488 520L477 522M489 517L476 519M487 514L475 516M238 422L244 426M237 424L243 428M236 426L242 430M239 422L236 426M167 271L172 290M165 273L169 290M170 274L163 276M169 276L164 277M84 153L75 156M82 149L74 152M80 146L73 148M278 352L271 362M275 349L267 359M270 347L263 356M265 345L259 353M261 342L255 351M277 356L259 343M473 539L467 544M471 535L464 541M468 532L462 538M465 530L459 535M462 527L456 532M472 542L458 527M389 47L397 50M389 51L395 54M385 54L393 57M385 58L392 61M383 62L390 65M395 47L386 66M395 47L387 66M5 344L6 354M2 346L3 354M-1 348L-0 355M-5 347L-4 355M246 98L240 106M243 96L237 104M240 95L234 103M238 92L232 101M484 544L478 555M482 541L476 553M480 539L473 552M477 537L470 551M474 538L468 549M480 553L468 547M184 19L169 31M181 18L167 29M178 17L166 27M170 32L166 27M451 262L452 281M446 262L447 281M441 265L442 282M436 264L437 282M431 266L432 283M453 264L429 266M452 271L432 273M354 21L354 41M351 21L352 41M356 30L350 30M118 326L133 329M118 331L132 334M117 336L131 339M132 328L130 340M126 325L123 339M390 211L383 223M384 210L379 221M381 206L375 219M385 223L373 217M387 222L373 215M97 224L94 230M93 220L90 229M89 220L86 228M561 434L549 446M559 429L545 443M560 439L553 431M393 507L390 520M390 506L387 519M387 507L384 518M129 357L127 369M124 356L122 368M119 357L118 368M115 356L113 367M110 355L108 366M130 359L108 356M534 239L528 255M530 239L525 254M528 236L523 253M524 238L520 252M531 252L519 248M534 241L523 238M129 54L131 70M124 56L127 70M133 69L124 70M131 63L124 64M198 469L204 487M195 468L201 487M192 470L198 488M189 471L196 489M203 481L193 485M494 185L501 195M491 189L497 198M487 189L494 200M483 192L490 202M481 197L487 205M211 64L193 69M210 61L192 66M207 59L191 63M194 71L192 61M455 179L468 190M452 180L466 192M451 183L464 194M367 5L352 16M363 3L350 12M361 0L348 9M358 -3L346 6M125 368L130 372M120 368L128 375M118 370L126 377M117 374L124 380M130 368L120 380M417 443L421 451M413 445L417 453M409 446L414 455M406 450L410 457M401 449L406 459M226 101L237 117M222 102L234 119M229 101L221 106M49 375L48 390M45 374L44 390M42 374L41 390M51 376L40 375M49 376L41 376M211 252L229 256M208 256L228 260M206 260L228 264M209 264L227 268M218 254L215 266M228 253L225 271M356 18L354 28M352 20L350 27M348 20L346 26M344 17L342 26M80 462L99 466M81 465L99 469M79 468L98 472M85 462L84 470M502 83L508 86M500 86L506 90M496 88L505 93M493 92L503 97M494 96L501 100M508 85L499 100M208 303L210 323M204 305L206 323M200 304L202 324M210 305L198 307M161 228L175 239M156 230L171 243M153 234L168 246M150 237L165 250M363 123L354 133M359 121L351 130M357 117L348 127M363 126L354 118M354 227L342 241M351 226L340 239M349 223L337 236M346 222L335 234M135 143L124 155M131 143L121 153M128 141L119 151M263 471L282 476M262 476L280 481M262 480L279 485M263 485L278 490M261 490L276 494M30 514L22 520M27 511L19 517M24 507L16 513M23 502L14 510M30 515L20 503M257 49L273 54M256 53L272 57M119 423L121 432M115 423L117 433M112 424L114 434M107 421L110 434M121 421L106 424M159 214L156 221M157 211L153 220M153 212L150 219M367 120L381 122M368 125L381 127M368 129L380 131M257 316L267 323M254 319L264 327M253 325L262 331M249 328L259 335M40 460L22 462M38 455L21 458M40 450L20 453M576 540L562 554M573 537L559 552M570 535L557 549M569 531L554 547M566 529L551 544M102 475L96 483M101 472L93 481M98 471L91 479M96 469L89 477M93 467L86 475M128 201L121 212M124 201L118 210M121 199L116 209M119 198L113 207M117 195L110 206M126 205L115 198M369 549L358 550M369 546L357 547M368 542L357 543M61 408L69 414M58 412L66 418M56 417L63 422M53 420L60 426M48 422L57 430M69 413L56 429M212 345L195 347M214 341L195 343M213 338L195 340M212 334L194 336M211 331L194 333M317 215L325 225M312 217L322 228M318 215L313 220M323 222L319 225M228 292L213 301M226 289L211 298M224 285L209 294M222 282L207 291M220 278L205 287M218 301L207 284M216 465L205 473M215 461L203 470M208 474L203 467M211 472L205 465M522 107L518 119M519 104L514 118M515 104L511 117M513 101L508 116M509 100L504 115M287 72L284 80M283 71L281 79M280 67L277 78M288 76L276 73M285 80L276 77M408 255L415 267M404 256L412 269M401 259L408 271M412 258L402 264M415 265L406 270M57 5L58 21M52 4L53 22M47 5L48 22M42 4L43 22M37 7L38 23M60 17L36 19M58 6L36 8M217 449L231 458M218 454L228 461M214 456L226 465M211 459L224 468M210 463L222 471M151 329L132 337M147 326L130 333M147 322L129 330M147 318L128 326M143 316L126 323M291 455L278 460M289 453L277 458M289 450L276 456M288 448L275 453M289 458L285 447M287 457L283 449M108 252L123 252M111 255L122 255M108 258L122 258M109 261L122 261M108 264L122 264M111 250L110 266M120 251L119 265M22 278L28 282M17 279L26 285M25 279L22 283M29 279L24 287M234 471L237 486M229 472L233 487M225 473L228 488M221 476L224 489M95 315L104 324M92 317L102 326M89 319L99 329M88 323L96 332M86 327L94 334M579 99L569 105M579 93L567 102M574 92L565 98M573 105L566 95M579 99L574 91M137 515L123 522M134 511L121 518M132 518L129 513M130 521L125 513M344 22L326 23M344 18L326 19M342 14L326 15M344 10L325 11M102 466L107 472M96 466L103 475M94 471L99 478M498 66L509 79M495 66L507 81M493 69L505 82M490 68L503 84M489 72L501 86M502 67L491 76M510 76L498 86M282 221L293 232M280 224L290 235M278 228L287 238M285 222L278 229M202 88L214 101M199 91L211 104M196 94L208 107M191 95L205 109M205 88L192 100M62 373L72 382M59 375L70 385M56 378L67 388M64 374L58 381M68 377L62 384M114 370L107 380M109 368L103 377M107 364L99 374M103 361L95 372M99 359L92 369M109 379L91 367M518 280L510 295M513 279L506 293M509 277L502 290M505 274L498 288M517 287L500 278M319 320L336 321M319 322L336 324M319 325L336 326M319 328L336 329M319 331L335 332M328 318L327 334M364 21L366 28M361 22L363 29M279 164L264 172M276 162L263 169M274 159L261 166M278 168L272 157M274 170L268 159M555 292L560 301M551 292L558 303M550 295L555 304M555 290L548 295M73 126L78 135M69 126L75 137M67 130L72 138M64 130L69 140M61 132L66 141M75 129L62 135M73 20L54 28M69 19L53 26M71 16L52 23M68 14L51 21M560 496L571 510M556 497L567 512M552 499L564 515M551 504L561 517M545 503L558 520M562 498L549 508M572 508L555 521M346 252L342 264M343 249L339 263M340 249L337 262M338 246L334 261M335 247L331 260M346 259L330 254M343 263L331 259M233 526L213 526M233 521L213 522M231 517L213 517M234 512L213 513M233 508L213 508M221 529L221 505M230 526L230 508M9 513L-2 518M9 510L-3 515M8 514L7 511M7 515L5 511M337 230L344 238M334 232L341 241M330 233L338 243M328 237L335 246M324 239L332 248M342 235L329 246M343 237L331 248M354 206L350 223M350 203L346 223M346 203L342 222M342 203L338 221M338 203L334 220M340 73L335 94M335 72L331 93M331 73L326 92M341 79L328 76M339 87L325 84M224 31L240 38M221 35L238 43M219 40L235 47M221 46L233 52M371 205L354 211M372 200L353 207M370 195L351 202M363 211L358 197M369 206L366 196M492 392L491 408M490 392L489 408M487 391L486 408M493 399L485 398M492 395L487 395M512 199L517 208M509 203L513 210M504 203L509 212M500 204L505 215M498 233L486 238M495 229L484 233M492 225L482 229M489 238L484 227M495 235L490 224M184 334L179 354M181 333L176 353M123 467L110 483M118 465L106 480M115 461L102 477M110 460L99 475M582 533L590 543M578 535L587 545M575 537L584 548M574 541L581 550M570 542L579 553M585 534L570 546M585 535L572 547M432 303L450 313M431 308L448 317M430 312L446 321M441 306L435 317M116 471L118 482M112 474L114 483M108 475L110 484M104 477L106 485M120 480L103 484M119 475L103 478M17 38L2 41M15 35L1 37M15 31L0 33M13 42L11 28M10 41L8 31M89 32L96 43M87 33L94 45M84 33L91 46M82 36L89 48M96 42L88 47M93 37L85 41M329 203L330 211M326 203L326 211M322 204L322 211M156 343L160 362M153 344L156 362M149 344L152 363M145 345L148 364M160 348L143 352M158 346L144 348M169 343L186 346M167 346L185 350M164 350L184 354M165 354L184 357M170 342L168 355M170 342L167 355M508 209L510 221M504 207L507 222M502 210L504 222M498 209L501 223M555 73L536 75M553 69L535 71M554 65L535 67M546 75L545 65M554 76L552 62M74 420L61 431M72 418L59 428M506 209L496 217M504 205L493 214M222 21L229 29M220 24L226 32M229 27L224 31M222 20L219 23M124 304L109 309M121 301L108 305M120 298L107 302M121 294L106 299M119 291L105 295M112 309L107 293M167 434L185 436M165 437L185 440M183 435L182 440M175 434L175 439M552 281L549 299M549 281L546 298M174 524L181 527M171 526L180 530M172 530L179 533M263 528L272 541M262 530L270 543M260 533L267 544M265 528L258 533M266 530L260 534M56 507L76 511M56 510L75 514M55 513L75 517M62 508L61 515M522 261L505 261M519 258L505 258M521 254L504 255M520 251L504 252M520 248L504 249M510 262L509 247M120 223L108 227M120 217L106 223M119 212L104 218M117 208L102 214M102 275L104 284M98 276L100 285M106 280L96 282M105 277L96 279M12 -4L23 6M10 -2L20 8M7 0L18 11M5 2L16 13M3 5L14 15M15 -2L6 8M20 2L10 12M321 271L308 282M318 267L305 279M313 265L302 276M311 262L299 272M310 256L296 269M319 274L305 259M578 179L577 192M576 178L574 192M573 176L571 191M570 177L568 191M567 178L565 191M579 189L564 187M232 75L224 89M230 71L220 86M233 78L226 74M448 256L452 271M444 259L448 272M97 290L107 291M98 293L107 294M97 296L106 297M96 299L106 300M96 302L105 303M137 253L155 256M136 257L154 261M133 261L153 266M134 266L152 270M131 270L151 275M145 252L140 275M423 422L415 428M422 418L413 424M418 415L411 421M139 240L126 248M136 236L124 244M133 233L122 240M131 246L125 237M16 267L34 276M15 270L33 279M15 274L31 282M13 276L30 285M11 279L29 288M23 269L16 282M515 97L512 117M512 97L509 116M509 98L506 116M506 99L503 115M503 98L500 115M513 117L500 115M85 418L77 422M82 415L75 418M80 411L73 415M80 406L71 411M75 403L68 407M82 422L72 403M548 308L563 313M547 311L562 315M545 314L561 318M546 317L560 321M163 502L168 511M160 505L164 513M155 507L160 516M151 509L156 518M147 512L151 520M167 505L146 516M40 322L38 339M35 323L33 338M30 321L28 338M42 329L27 327M215 285L227 290M213 288L226 293M212 291L225 297M213 295L223 300M219 284L213 298M225 286L218 300M277 480L277 489M275 477L274 489M272 480L271 489M269 477L268 489M267 478L266 489M278 482L266 481M437 260L455 265M438 264L454 269M435 267L453 273M433 271L452 276M435 275L451 280M442 261L437 277M257 191L258 207M254 191L254 207M250 194L250 207M246 192L246 207M242 193L243 208M295 162L282 165M293 157L281 160M294 152L280 155M293 147L279 150M291 143L278 146M295 164L290 141M370 38L371 56M365 37L366 57M372 53L365 53M371 47L365 48M43 153L52 164M41 155L49 165M40 159L47 167M276 239L284 244M275 242L283 246M272 244L281 249M272 247L279 251M270 249L278 254M279 240L272 251M277 239L270 250M56 440L66 445M54 443L64 448M66 442L63 450M424 213L427 224M420 214L424 225M416 213L420 226M429 221L417 224M459 265L446 280M455 264L443 277M453 261L441 275M450 259L438 273M448 277L440 270M449 277L441 269M42 504L41 522M39 504L38 522M35 506L34 522M43 514L34 513M42 516L34 515M16 297L15 310M13 297L12 310M10 296L9 310M7 297L6 309M466 528L456 539M465 524L453 536M463 521L450 534M462 536L453 528M457 540L449 532M214 426L205 441M212 424L202 439M209 440L201 436M142 28L126 33M141 25L125 30M139 22L124 27M127 35L123 25M112 377L121 382M107 380L119 386M108 386L117 390M116 377L110 389M118 378L112 391M266 240L270 250M264 242L267 251M261 240L265 252M259 242L263 252M271 246L259 250M269 240L257 244M156 255L147 261M156 250L145 257M151 259L149 255M106 280L106 294M101 277L102 294M97 278L98 295M93 277L94 295M107 279L92 280M143 367L147 377M141 368L144 378M138 371L141 379M148 375L138 378M547 191L541 202M542 191L537 199M540 186L533 197M489 449L503 450M491 454L503 454M490 458L503 459M491 462L503 463M490 466L502 467M494 449L493 467M498 449L497 468" stroke="#3c3c3b" stroke-width="0.85" fill="none"/><g transform="translate(0,0) scale(0.27855)" fill="none" stroke="#464543" stroke-linejoin="round" stroke-linecap="round">
<path stroke-width="19.2" d="M0,290 L110,230 L265,150 L350,205 L535,330 L665,295 L810,345"/>
<path stroke-width="12.4" d="M0,185 L45,190 L110,230"/>
<path stroke-width="21.0" d="M1052,85 L955,180 L810,345 L545,630 L360,790 L250,875 L150,960 L120,987"/>
<path stroke-width="17.5" d="M810,345 L885,435 L1000,580 L1060,660"/>
<path stroke-width="12.4" d="M885,435 L800,540 L745,640 L720,740 L741,935 L816,1053"/>
<path stroke-width="9.3" d="M850,490 L800,560 L790,680 L800,780 L830,987"/>
<path stroke-width="14.0" d="M450,987 L760,930 L1052,880"/>
<path stroke-width="7.8" d="M800,680 L1000,650"/>
<path stroke-width="7.8" d="M730,780 L990,740"/>
<path stroke-width="7.8" d="M1000,650 L970,850 L990,987"/>
<path stroke-width="7.8" d="M0,580 L60,620 L80,700 L95,790 L70,850 L40,880"/>
<path stroke-width="7.8" d="M0,500 L110,560 L215,610 L235,700 L290,840"/>
<path stroke-width="9.3" d="M460,740 L540,850 L590,987"/>
<path stroke-width="7.8" d="M470,790 L420,987"/>
<path stroke-width="7.8" d="M660,510 L720,460 L775,515 L640,740"/>
<path stroke-width="7.8" d="M660,515 L745,590"/>
<path stroke-width="7.8" d="M545,670 L640,745"/>
<path stroke-width="9.3" d="M385,230 L560,40"/>
<path stroke-width="9.3" d="M650,0 L660,40 L780,160 L895,240"/>
<path stroke-width="7.8" d="M0,870 L160,920"/>
<path stroke-width="7.8" d="M860,520 L940,600 L990,580"/>
</g>
<g transform="translate(293,0) scale(0.27855)" fill="none" stroke="#464543" stroke-linejoin="round" stroke-linecap="round">
<path stroke-width="17.5" d="M0,870 L400,800 L1052,680"/>
<path stroke-width="21.0" d="M-5,90 L65,-20"/>
<path stroke-width="12.4" d="M530,0 L545,60 L575,260 L585,400 L570,520 L540,640 L500,780 L470,987"/>
<path stroke-width="9.3" d="M560,45 L610,85 L690,10 L705,0"/>
<path stroke-width="10.8" d="M690,10 L780,80 L860,180 L880,240 L860,320 L800,370 L770,430 L765,480 L810,720"/>
<path stroke-width="9.3" d="M680,460 L765,435 L850,405 L955,330 L890,230"/>
<path stroke-width="9.3" d="M680,460 L630,540 L590,660 L600,760"/>
<path stroke-width="7.8" d="M595,670 L790,640"/>
<path stroke-width="6.2" d="M620,580 L700,590"/>
<path stroke-width="6.2" d="M630,540 L700,550"/>
<path stroke-width="6.2" d="M700,460 L720,640"/>
<path stroke-width="9.3" d="M215,270 L350,400 L450,500 L555,590"/>
<path stroke-width="6.2" d="M180,340 L215,270"/>
<path stroke-width="9.3" d="M350,400 L560,270"/>
<path stroke-width="9.3" d="M150,370 L60,545 L0,620"/>
<path stroke-width="9.3" d="M60,545 L180,630 L200,720"/>
<path stroke-width="7.8" d="M175,360 L290,390 L300,430 L180,490 L110,570"/>
<path stroke-width="9.3" d="M20,750 L440,690 L510,720"/>
<path stroke-width="14.0" d="M-8,650 L26,804 L39,869 L48,987"/>
<path stroke-width="7.8" d="M105,750 L125,860"/>
<path stroke-width="7.8" d="M180,735 L200,850"/>
<path stroke-width="32.0" d="M1060,706 L700,987"/>
<path stroke-width="7.8" d="M780,960 L1052,890"/>
<path stroke-width="7.8" d="M940,0 L1000,50 L1052,30"/>
<path stroke-width="7.8" d="M800,370 L850,405"/>
</g>
<g transform="translate(0,275) scale(0.27855)" fill="none" stroke="#464543" stroke-linejoin="round" stroke-linecap="round">
<path stroke-width="30.0" d="M0,730 L100,690 L250,670 L430,700 L600,735 L800,780 L1052,830"/>
<path stroke-width="17.5" d="M310,0 L400,80 L410,130 L630,320 L1052,660"/>
<path stroke-width="17.5" d="M150,0 L120,180 L135,230 L95,420 L70,560 L55,690"/>
<path stroke-width="9.3" d="M0,145 L50,145 L150,190 L270,340"/>
<path stroke-width="9.3" d="M0,380 L100,395 L300,430"/>
<path stroke-width="7.8" d="M0,225 L135,250"/>
<path stroke-width="9.3" d="M410,130 L320,290 L370,570 L380,660"/>
<path stroke-width="7.8" d="M320,290 L270,340"/>
<path stroke-width="9.3" d="M140,510 L380,560 L510,530 L540,470 L520,430 L630,320"/>
<path stroke-width="9.3" d="M600,0 L680,210 L640,310"/>
<path stroke-width="7.8" d="M660,150 L760,155 L850,110"/>
<path stroke-width="10.8" d="M790,-20 L880,150 L1052,350"/>
<path stroke-width="7.8" d="M540,480 L620,540 L700,600 L590,720"/>
<path stroke-width="7.8" d="M660,650 L770,680 L890,760"/>
<path stroke-width="7.8" d="M940,710 L1052,600"/>
<path stroke-width="9.3" d="M150,680 L220,987"/>
<path stroke-width="7.8" d="M330,650 L250,760"/>
<path stroke-width="7.8" d="M480,760 L460,900 L480,987"/>
<path stroke-width="7.8" d="M860,810 L790,987"/>
<path stroke-width="6.2" d="M600,935 L860,960"/>
<path stroke-width="7.8" d="M55,140 L20,330 L0,420"/>
</g>
<g transform="translate(293,275) scale(0.27855)" fill="none" stroke="#464543" stroke-linejoin="round" stroke-linecap="round">
<path stroke-width="32.0" d="M720,0 L600,50 L540,100 L460,270 L370,400 L260,580 L150,760 L120,800 L60,830 L0,840"/>
<path stroke-width="17.5" d="M50,100 L200,160 L270,240 L340,310 L370,380"/>
<path stroke-width="10.8" d="M0,380 L90,465 L240,575"/>
<path stroke-width="17.5" d="M0,660 L130,760 L150,790 L410,987"/>
<path stroke-width="10.8" d="M270,240 L180,370 L90,465 L0,580"/>
<path stroke-width="10.8" d="M180,370 L360,460 L510,550 L600,600 L830,730 L900,760"/>
<path stroke-width="10.8" d="M460,270 L560,275 L720,350 L930,520 L840,720 L720,800 L640,987"/>
<path stroke-width="10.8" d="M720,0 L780,160 L930,340 L1052,470"/>
<path stroke-width="7.8" d="M780,160 L860,80 L800,40"/>
<path stroke-width="7.8" d="M720,350 L830,235"/>
<path stroke-width="7.8" d="M790,410 L890,310"/>
<path stroke-width="9.3" d="M220,0 L230,80 L190,160"/>
<path stroke-width="9.3" d="M50,100 L0,260"/>
<path stroke-width="7.8" d="M510,550 L430,620 L240,830"/>
<path stroke-width="7.8" d="M640,630 L650,720 L550,840 L500,800 L390,987"/>
<path stroke-width="7.8" d="M580,600 L540,650 L440,760"/>
<path stroke-width="6.2" d="M100,850 L0,987"/>
</g>
<g fill="#1e1e1d">
 <path d="M0,194 C8,195 14,203 17,212 C22,218 26,226 24,233 C21,239 12,241 0,241 Z"/>
 <path d="M18,101 L23,99 L27,104 L32,108 L31,114 L27,113 L25,119 L21,116 L15,118 L13,113 L19,110 Z"/>
 <path d="M112,87 L117,86 L121,90 L119,95 L114,94 Z"/>
 <path d="M69,440 C72,437 75,441 73,444 Z"/>
 <path d="M489,60 L495,64 L490,72 L484,76 L483,66 Z"/>
 <path d="M491,23 L494,22 L496,21 L499,24 L497,29 L493,30 L491,27 Z"/><path d="M469,34 L472,33 L473,37 L470,38 Z"/>
 <path d="M539,420 C547,418 551,426 545,432 C539,432 535,426 539,420 Z"/>
 <path d="M568,478 C573,476 575,484 573,490 C569,490 566,484 568,478 Z"/>
 <path d="M180,97 C184,95 186,99 184,101 Z"/>
 <path d="M165,525 C170,523 172,528 168,531 Z"/>
 <path d="M143,506 C147,503 152,508 148,512 Z"/>
</g>
<g font-family="Liberation Sans" font-size="11" fill="#b7b7b7" stroke="#2a2a29" stroke-width="2.5" paint-order="stroke" letter-spacing="0.2">
<text transform="translate(286.7,25) rotate(-49)" text-anchor="middle" dy="4" >Meerut Road</text>
<text transform="translate(125.3,197.8) rotate(-42)" text-anchor="middle" dy="4" >Meerut Road</text>
<text transform="translate(220,260.7) rotate(68)" text-anchor="middle" dy="4" >Maharana Pratap Marg</text>
<text transform="translate(374.5,228.2) rotate(-10.5)" text-anchor="middle" dy="4" >Hapur Road</text>
<text transform="translate(513.6,168.2) rotate(78)" text-anchor="middle" dy="4" >Road No 3</text>
<text transform="translate(479,278.5) rotate(-40)" text-anchor="middle" dy="4" >Flyover</text>
<text transform="translate(381.6,412.2) rotate(-62)" text-anchor="middle" dy="4" >Flyover</text>
<text transform="translate(100.3,409.5) rotate(78)" text-anchor="middle" dy="4" >Thana Road</text>
<text transform="translate(39,469.6) rotate(-10)" text-anchor="middle" dy="4" >E Service Road</text>
<text transform="translate(138.2,473.5) rotate(10)" text-anchor="middle" dy="4" >Flyover</text>
<text transform="translate(216,488) rotate(13)" text-anchor="middle" dy="4" >Hapur Bypass</text>
<text transform="translate(382,530.2) rotate(37)" text-anchor="middle" dy="4" >Grand Trunk Road</text>
<text x="58.5" y="525" text-anchor="middle" font-size="11" letter-spacing="0.3" fill="#8d8d8d">RAGHUNATHPURI</text>
</g>
<text x="-2" y="270" font-family="Liberation Sans" font-size="23" fill="#ececec" stroke="#2a2a29" stroke-width="2" paint-order="stroke" textLength="104" lengthAdjust="spacingAndGlyphs">Ghaziabad</text><text x="-2" y="270" font-family="Liberation Sans" font-size="23" fill="#ececec" stroke="#ececec" stroke-width="0.4" textLength="104" lengthAdjust="spacingAndGlyphs">Ghaziabad</text>
<!-- mapbox logo -->
<g>
 <circle cx="17.5" cy="21.4" r="10.2" fill="#1e1e1e"/>
 <circle cx="17.5" cy="21.4" r="9.4" fill="#ececec"/>
 <path d="M13.2,25.8 L13.2,20.9 A5,5 0 1 1 18.2,25.8 Z" fill="#1a1a1a"/>
 <path d="M18.4,18 L19.1,20 L21,20.7 L19.1,21.4 L18.4,23.4 L17.7,21.4 L15.8,20.7 L17.7,20 Z" fill="#f0f0f0"/>
 <text x="30.5" y="26" font-family="Liberation Sans" font-size="15.5" fill="#ececec" stroke="#1e1e1e" stroke-width="1.6" paint-order="stroke" textLength="61" lengthAdjust="spacingAndGlyphs">mapbox</text><text x="30.5" y="26" font-family="Liberation Sans" font-size="15.5" fill="#ececec" stroke="#ececec" stroke-width="0.35" textLength="61" lengthAdjust="spacingAndGlyphs">mapbox</text>
</g>
<!-- cluster circle -->
<circle cx="293" cy="274.8" r="26.8" fill="#e54e00" stroke="#8a9aa8" stroke-width="0.6"/>
<path d="M292.4,269 L294.9,269 L294.9,278 L292.5,278 L292.5,272.2 L289.9,273.7 L289.9,271.3 Z" fill="#15213a"/>
<!-- info -->
<circle cx="563.9" cy="527.9" r="12" fill="#a6a6a6"/>
<circle cx="563.9" cy="527.9" r="7" fill="#000"/>
<circle cx="563.9" cy="524.3" r="1.1" fill="#a6a6a6"/>
<rect x="563" y="526.8" width="1.8" height="6" fill="#a6a6a6"/>
<!-- legend -->
<rect x="14" y="500" width="76" height="40" fill="#8e9eae"/>
<text x="58.5" y="525" text-anchor="middle" font-family="Liberation Sans" font-size="11" letter-spacing="0.3" fill="#b4c0cc" fill-opacity="0.7">RAGHUNATHPURI</text>
<rect x="22" y="508" width="16" height="24" fill="#e54e00"/>
<text x="46" y="519" font-family="Liberation Sans" font-size="12" fill="#111">_count</text>
</svg>
</div>
<!-- MAP END -->
<!-- Panel 4: Active users -->
<div class="panel" style="left:630px;top:377px;width:858px;height:250px">
  <div class="t ptitle" style="left:12px;top:9px">Active Users</div>
</div>
<!-- Panel 5: Table -->
<div class="panel" style="left:630px;top:635px;width:858px;height:336px">
  <div class="t" style="left:12px;top:10px;font-size:12px;color:#9eb0c4">Recent - Destination Activities</div>
</div>

<!-- table -->
<div class="abs" style="left:642px;top:667px;width:834px;height:292px;border:1px solid #22344e;background:#161d2f;overflow:hidden">
  <div class="abs" style="left:0;top:0;width:832px;height:23px;background:#1a2337;border-bottom:1px solid #22344e"></div>
  <div class="abs" style="left:0;top:23px;width:832px;height:37px;border-bottom:1px solid #22344e"></div>
  <div class="abs" style="left:158px;top:5px;width:1px;height:13px;background:#2f4361"></div>
  <div class="abs" style="left:332px;top:5px;width:1px;height:13px;background:#2f4361"></div>
  <div class="abs" style="left:544px;top:5px;width:1px;height:13px;background:#2f4361"></div>
  <div class="abs" style="left:668px;top:5px;width:1px;height:13px;background:#2f4361"></div>
  <div class="abs" style="left:788px;top:5px;width:1px;height:13px;background:#2f4361"></div>
  <div class="t" style="left:31px;top:4.5px;font-size:12px;color:#9eb0c4">_orgid</div>
  <div class="t" style="left:174px;top:4.5px;font-size:12px;color:#9eb0c4">EventTime</div>
  <div class="t" style="left:348px;top:4.5px;font-size:12px;color:#9eb0c4">eventName</div>
  <div class="t" style="left:559px;top:4.5px;font-size:12px;color:#9eb0c4">DestinationName</div>
  <div class="t" style="left:683px;top:4.5px;font-size:12px;color:#9eb0c4">DataSourceType</div>
  <div class="t" style="left:803px;top:4.5px;font-size:12px;color:#9eb0c4">Destination</div>
  <div class="t" style="left:4.5px;top:28px;font-size:12px;color:#8a9bb0">1</div>
  <div class="t" style="left:31px;top:28px;font-size:12px;color:#e3e6ea">0000000000BDA487</div>
  <div class="t" style="left:174px;top:28px;font-size:12px;color:#e3e6ea">2026-03-18T08:35:10.587Z</div>
  <div class="t" style="left:348px;top:28px;font-size:12px;color:#e3e6ea;line-height:14px;top:27px">DataForwardingDestinationCreate
d</div>
  <div class="t" style="left:559px;top:28px;font-size:12px;color:#e3e6ea">test</div>
  <div class="t" style="left:683px;top:28px;font-size:12px;color:#e3e6ea">Index</div>
  <div class="t" style="left:803px;top:28px;font-size:12px;color:#e3e6ea">Amazon S3</div>
</div>
<svg class="abs" style="left:0;top:0" width="1500" height="987">
  <g stroke="#34486a" stroke-width="1">
    <line x1="50" y1="181.5" x2="786" y2="181.5"/>
    <line x1="50" y1="222.5" x2="786" y2="222.5"/>
    <line x1="50" y1="263.5" x2="786" y2="263.5"/>
    <line x1="50" y1="304.5" x2="786" y2="304.5"/>
    <line x1="88.5" y1="304" x2="88.5" y2="309"/>
    <line x1="161.5" y1="304" x2="161.5" y2="309"/>
    <line x1="235.5" y1="304" x2="235.5" y2="309"/>
    <line x1="308.5" y1="304" x2="308.5" y2="309"/>
    <line x1="381.5" y1="304" x2="381.5" y2="309"/>
    <line x1="455.5" y1="304" x2="455.5" y2="309"/>
    <line x1="528.5" y1="304" x2="528.5" y2="309"/>
    <line x1="601.5" y1="304" x2="601.5" y2="309"/>
    <line x1="675.5" y1="304" x2="675.5" y2="309"/>
    <line x1="748.5" y1="304" x2="748.5" y2="309"/>
  </g>
  <circle cx="381" cy="222.5" r="2.6" fill="#1f7bc0"/>
  <g font-family="Liberation Sans" font-size="12" fill="#d5d9df">
    <text x="45" y="184.5" text-anchor="end">1.5</text>
    <text x="45" y="225.5" text-anchor="end">1</text>
    <text x="45" y="266.5" text-anchor="end">0.5</text>
    <text x="45" y="307.5" text-anchor="end">0</text>
    <g text-anchor="middle">
    <text x="88" y="323">Mar 10</text>
    <text x="161" y="323">Mar 12</text>
    <text x="235" y="323">Mar 14</text>
    <text x="308" y="323">Mar 16</text>
    <text x="381" y="323">Mar 18</text>
    <text x="455" y="323">Mar 20</text>
    <text x="528" y="323">Mar 22</text>
    <text x="601" y="323">Mar 24</text>
    <text x="675" y="323">Mar 26</text>
    <text x="748" y="323">Mar 28</text>
    </g>
  </g>

  <!-- time shift chart -->
  <g stroke="#34486a" stroke-width="1">
    <line x1="956.5" y1="161" x2="956.5" y2="308"/>
    <line x1="1040.5" y1="161" x2="1040.5" y2="308"/>
    <line x1="1124.5" y1="161" x2="1124.5" y2="308"/>
    <line x1="1207.5" y1="161" x2="1207.5" y2="308"/>
    <line x1="1291.5" y1="161" x2="1291.5" y2="308"/>
    <line x1="1374.5" y1="161" x2="1374.5" y2="308"/>
    <line x1="1458.5" y1="161" x2="1458.5" y2="308"/>
    <line x1="951" y1="185.5" x2="956" y2="185.5"/>
    <line x1="951" y1="233.5" x2="956" y2="233.5"/>
    <line x1="951" y1="280.5" x2="956" y2="280.5"/>
  </g>
  <rect x="957" y="214" width="418" height="38" fill="#1876b8"/>
  <g font-family="Liberation Sans" font-size="12" fill="#d5d9df">
    <text x="833" y="236">EventName=DataFor</text>
    <text x="833" y="250">wardingDestin...reate</text>
    <text x="833" y="264">d</text>
    <g text-anchor="middle">
    <text x="956.5" y="323">0</text>
    <text x="1040.5" y="323">0.2</text>
    <text x="1124.5" y="323">0.4</text>
    <text x="1207.5" y="323">0.6</text>
    <text x="1291.5" y="323">0.8</text>
    <text x="1374.5" y="323">1</text>
    <text x="1458.5" y="323">1.2</text>
    </g>
  </g>
  <circle cx="838" cy="340" r="5" fill="#1a7bc2"/>
  <circle cx="895" cy="340" r="5" fill="#a6d3ec"/>
  <g font-family="Liberation Sans" font-size="12" fill="#c0c5cc">
    <text x="848" y="345">Count</text>
    <text x="905" y="345">Count_Shift_1d</text>
  </g>

  <!-- active users chart -->
  <g stroke="#34486a" stroke-width="1">
    <line x1="772.5" y1="419" x2="772.5" y2="567"/>
    <line x1="834.5" y1="419" x2="834.5" y2="567"/>
    <line x1="897.5" y1="419" x2="897.5" y2="567"/>
    <line x1="959.5" y1="419" x2="959.5" y2="567"/>
    <line x1="1021.5" y1="419" x2="1021.5" y2="567"/>
    <line x1="1084.5" y1="419" x2="1084.5" y2="567"/>
    <line x1="1146.5" y1="419" x2="1146.5" y2="567"/>
    <line x1="1208.5" y1="419" x2="1208.5" y2="567"/>
    <line x1="1271.5" y1="419" x2="1271.5" y2="567"/>
    <line x1="1333.5" y1="419" x2="1333.5" y2="567"/>
    <line x1="1395.5" y1="419" x2="1395.5" y2="567"/>
    <line x1="1458.5" y1="419" x2="1458.5" y2="567"/>
    <line x1="767" y1="443.5" x2="772" y2="443.5"/>
    <line x1="767" y1="491.5" x2="772" y2="491.5"/>
    <line x1="767" y1="538.5" x2="772" y2="538.5"/>
  </g>
  <rect x="773" y="472" width="623" height="38" fill="#1876b8"/>
  <g font-family="Liberation Sans" font-size="12" fill="#d5d9df">
    <text x="647" y="494">_orgid=0000000000B</text>
    <text x="647" y="508">DA487</text>
    <text x="647" y="522">User=apoorv.kudesia</text>
    <g text-anchor="middle">
    <text x="772.5" y="581">0</text>
    <text x="834.5" y="581">0.1</text>
    <text x="897.5" y="581">0.2</text>
    <text x="959.5" y="581">0.3</text>
    <text x="1021.5" y="581">0.4</text>
    <text x="1084.5" y="581">0.5</text>
    <text x="1146.5" y="581">0.6</text>
    <text x="1208.5" y="581">0.7</text>
    <text x="1271.5" y="581">0.8</text>
    <text x="1333.5" y="581">0.9</text>
    <text x="1395.5" y="581">1</text>
    <text x="1458.5" y="581">1.1</text>
    </g>
  </g>
  <circle cx="652" cy="598" r="5" fill="#1a7bc2"/>
  <circle cx="865" cy="598" r="5" fill="#2ca02c"/>
  <circle cx="1077" cy="598" r="5" fill="#a6d3ec"/>
  <g font-family="Liberation Sans" font-size="12" fill="#c0c5cc">
    <text x="662" y="603">DataForwardingDestinationCreated</text>
    <text x="875" y="603">DataForwardingDestinationDeleted</text>
    <text x="1087" y="603">DataForwardingDestinationUpdated</text>
  </g>
</svg>
</div>
</body></html>
